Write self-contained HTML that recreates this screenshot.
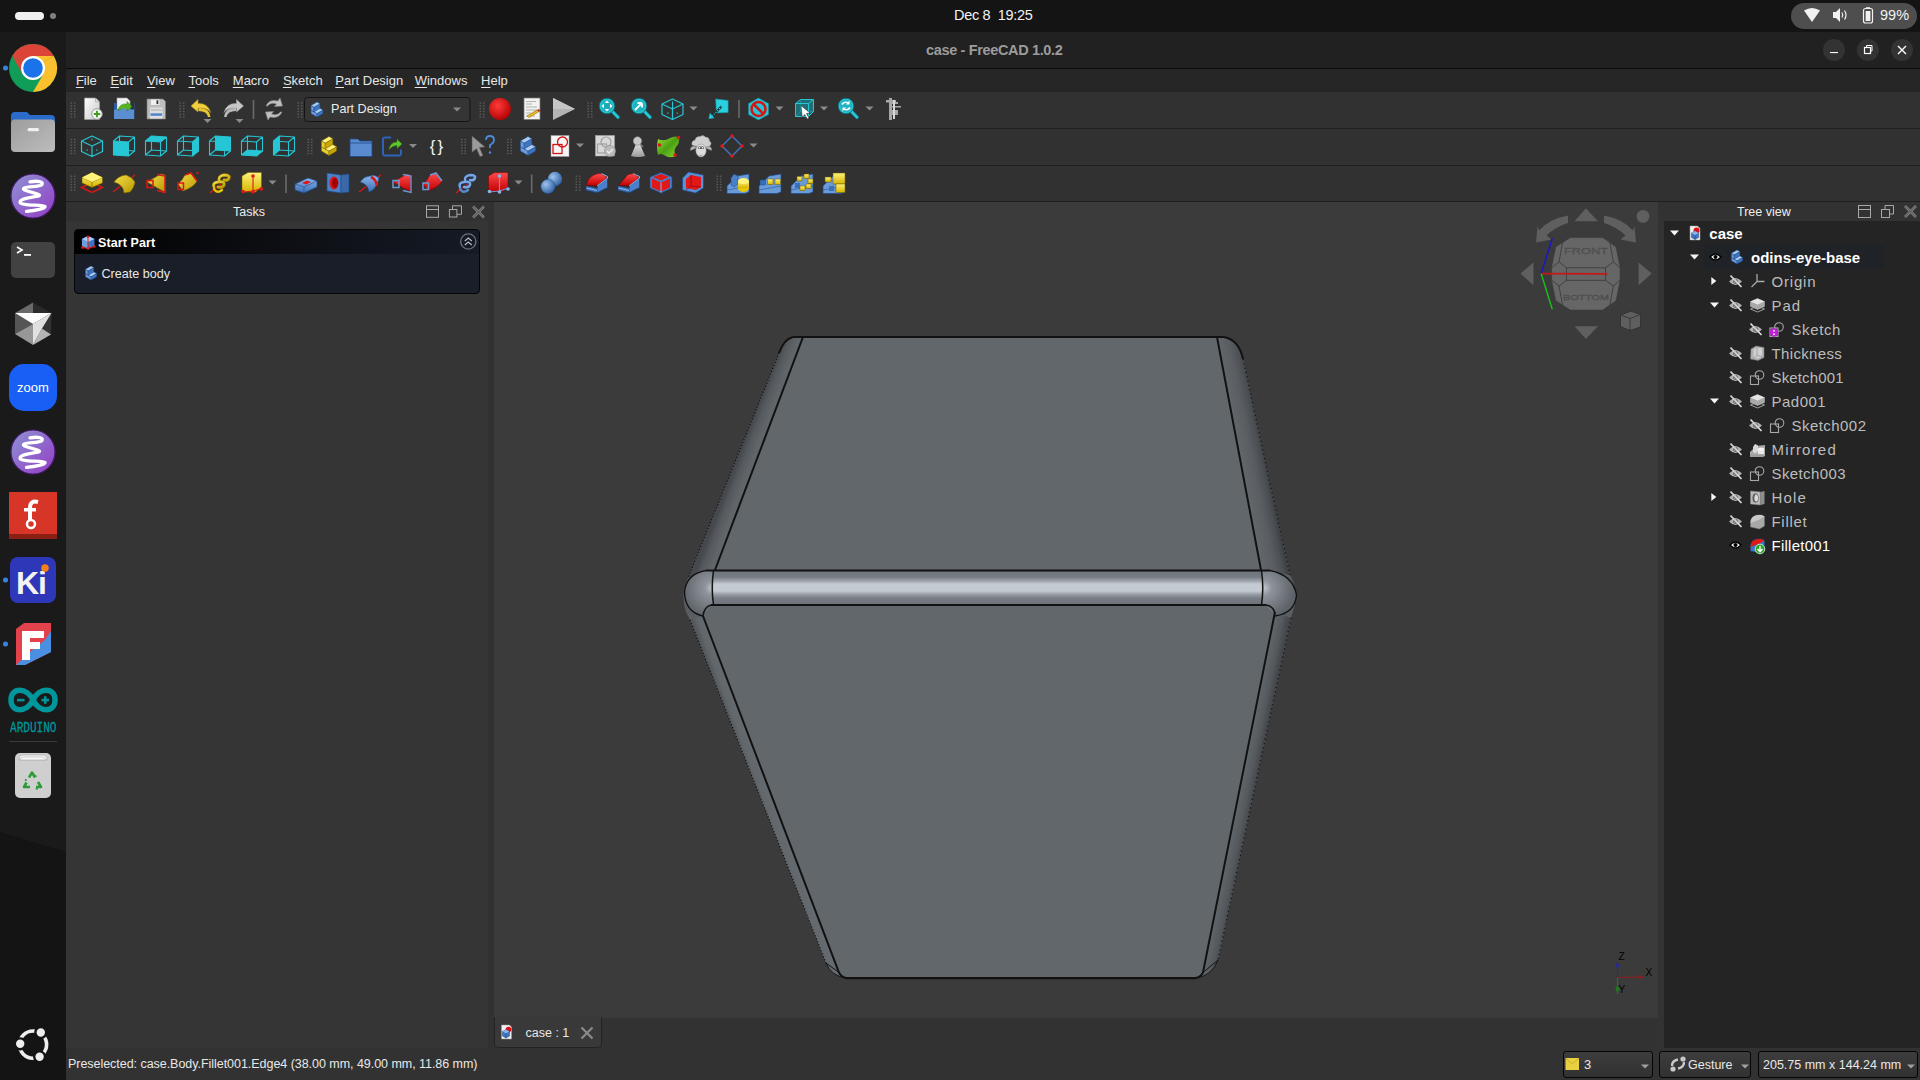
<!DOCTYPE html>
<html><head><meta charset="utf-8">
<style>
*{margin:0;padding:0;box-sizing:border-box}
html,body{width:1920px;height:1080px;overflow:hidden;background:#323232;font-family:"Liberation Sans",sans-serif}
.a{position:absolute}
#topbar{left:0;top:0;width:1920px;height:32px;background:#141414}
#dock{left:0;top:32px;width:66px;height:1048px;background:#1a1a1a}
#titlebar{left:66px;top:32px;width:1854px;height:37px;background:#212121;border-bottom:1px solid #0a0a0a}
#menubar{left:66px;top:69px;width:1854px;height:23px;background:#262626}
.tb{left:66px;width:1854px;background:#313131;border-bottom:1px solid #1f1f1f}
#tasks{left:66px;top:202px;width:422px;height:846px;background:#333333}
#view{left:494px;top:202px;width:1166px;height:815px;background:#3b3b3b}
#tree{left:1663px;top:202px;width:257px;height:846px;background:#333333}
#status{left:66px;top:1048px;width:1854px;height:32px;background:#323232}
.mn{font-size:13px;color:#e8e8e8}
.mn u{text-decoration-thickness:1px;text-underline-offset:2px}
.txt{white-space:nowrap;color:#e6e6e6}
</style></head>
<body>
<div id="topbar" class="a"></div>
<div class="a" style="left:15px;top:12px;width:29px;height:8px;border-radius:4px;background:#f0f0f0"></div>
<div class="a" style="left:50px;top:13px;width:6px;height:6px;border-radius:3px;background:#808080"></div>
<div class="a txt" style="left:954px;top:7px;font-size:14.5px;color:#f2f2f2;letter-spacing:-0.3px">Dec 8&nbsp;&nbsp;19:25</div>
<div class="a" style="left:1791px;top:3px;width:126px;height:26px;border-radius:13px;background:#4e4e4e"></div>
<svg class="a" style="left:1800px;top:6px" width="110" height="20" viewBox="0 0 110 20">
 <path d="M4 4.5 Q12 -0.5 20 4.5 L12 16 Z" fill="#f2f2f2"/>
 <path d="M33 6 h3 l4 -4 v14 l-4 -4 h-3 z" fill="#f2f2f2"/>
 <path d="M42 6.5 q1.6 2.5 0 5" stroke="#f2f2f2" stroke-width="1.2" fill="none"/>
 <path d="M44.5 4.5 q3 4.5 0 9" stroke="#f2f2f2" stroke-width="1.2" fill="none"/>
 <rect x="63.5" y="2.5" width="9" height="14.5" rx="2" stroke="#f2f2f2" stroke-width="1.2" fill="none"/>
 <rect x="65.6" y="5" width="4.8" height="10" fill="#f2f2f2"/>
 <rect x="66" y="1.2" width="4" height="1.5" fill="#f2f2f2"/>
</svg>
<div class="a txt" style="left:1880px;top:7px;font-size:14.5px;color:#f2f2f2">99%</div>

<div id="dock" class="a"></div>
<svg class="a" style="left:0;top:820px" width="66" height="260" viewBox="0 820 66 260"><path d="M0 832 L66 852 V1080 H0Z" fill="#141414"/></svg>
<svg class="a" style="left:0;top:32px" width="66" height="1048" viewBox="0 32 66 1048"><defs><linearGradient id="fold" x1="0" y1="0" x2="1" y2="1"><stop offset="0" stop-color="#9c9c9c"/><stop offset="1" stop-color="#bdbdbd"/></linearGradient><linearGradient id="emg" x1="0" y1="0" x2="1" y2="1"><stop offset="0" stop-color="#8c94d4"/><stop offset="1" stop-color="#943cc4"/></linearGradient><linearGradient id="emg2" x1="0" y1="0" x2="1" y2="1"><stop offset="0" stop-color="#8c94d4"/><stop offset="1" stop-color="#943cc4"/></linearGradient></defs>
 <circle cx="5.5" cy="68" r="2.5" fill="#3584e4"/>
 <g transform="translate(33,68)">
  <circle r="24" fill="#0f9d58"/>
  <path d="M0 0 L-20.8 -12 A24 24 0 0 1 20.8 -12 Z" fill="#db4437"/>
  <path d="M0 0 L20.8 -12 A24 24 0 0 1 0 24 Z" fill="#fbc02d"/>
  <path d="M-20.8 -12 L-10.4 6 L0 0Z" fill="#db4437"/>
  <path d="M20.8 -12 L0 -12 L0 0Z" fill="#fbc02d"/>
  <path d="M0 24 L10.4 6 L0 0Z" fill="#0f9d58"/>
  <circle r="12" fill="#fff"/><circle r="9.8" fill="#1a73e8"/>
 </g>
 <path d="M11 116 q0 -4 4 -4 h12 l3 3 h21 q4 0 4 4 v8 h-44z" fill="#2b6bc9"/>
 <rect x="11" y="119.5" width="44" height="32.5" rx="4" fill="url(#fold)"/>
 <rect x="27.5" y="128" width="11.5" height="3.2" rx="1.5" fill="#f0f0f0"/>
 <circle cx="33" cy="196" r="22" fill="url(#emg)" stroke="#4a1a70" stroke-width="1.2"/>
 <path transform="translate(0,0)" d="M30 181.8 C 38 180.5, 43.5 181.5, 42 184.5 C 40 187.5, 25 186, 23.5 188.5 C 22.5 191, 37 193, 39.5 195.2 C 40 197, 21 197, 20 202 C 19.5 206, 43 204.5, 45 206.5 C 46 208.5, 35 210.5, 26.5 211.3" stroke="#fff" stroke-width="3.3" fill="none" stroke-linecap="round" stroke-linejoin="round"/>
 <rect x="11" y="242" width="44" height="36" rx="5" fill="#424242"/>
 <path d="M17 247 l5 3 l-5 3" stroke="#fff" stroke-width="1.6" fill="none"/>
 <rect x="24" y="254" width="7" height="1.8" fill="#fff"/>
 <g>
  <path d="M33 302.5 L15 313 L33 313Z" fill="#6a6a6a"/>
  <path d="M33 302.5 L33 313 L51.5 313Z" fill="#2a2a2a"/>
  <path d="M15 313 L15 334 L33 324Z" fill="#555"/>
  <path d="M15 334 L33 324 L33 345Z" fill="#979797"/>
  <path d="M51.5 313 L42 328.5 L51 334.5Z" fill="#333"/>
  <path d="M42 328.5 L51 334.5 L33 345Z" fill="#b4b4b4"/>
  <path d="M51.5 313 L33 324 L33 345 L42 328.5Z" fill="#e0e0e0"/>
  <path d="M15 313 L51.5 313 L33 324Z" fill="#fcfcfc"/>
 </g>
 <rect x="9" y="364" width="48" height="47" rx="15" fill="#1a5ff5"/>
 <text x="33" y="392" font-family="Liberation Sans" font-size="13" fill="#fff" text-anchor="middle">zoom</text>
 <circle cx="33" cy="452" r="22" fill="url(#emg2)" stroke="#4a1a70" stroke-width="1.2"/>
 <path transform="translate(0,256)" d="M30 181.8 C 38 180.5, 43.5 181.5, 42 184.5 C 40 187.5, 25 186, 23.5 188.5 C 22.5 191, 37 193, 39.5 195.2 C 40 197, 21 197, 20 202 C 19.5 206, 43 204.5, 45 206.5 C 46 208.5, 35 210.5, 26.5 211.3" stroke="#fff" stroke-width="3.3" fill="none" stroke-linecap="round" stroke-linejoin="round"/>
 <rect x="9" y="492" width="48" height="47" fill="#d63527"/>
 <rect x="9" y="534" width="48" height="5" fill="#8a1f15"/>
 <path d="M38 502 q-8 -2 -8 6 v13" stroke="#fff" stroke-width="4" fill="none"/>
 <rect x="24" y="508" width="12" height="3.5" fill="#fff"/>
 <circle cx="31" cy="524" r="4" fill="none" stroke="#fff" stroke-width="2.5"/>
 <circle cx="5.5" cy="580" r="2.5" fill="#3584e4"/>
 <rect x="10" y="557" width="46" height="46" rx="8" fill="#2e37b8"/>
 <text x="31" y="594" font-family="Liberation Sans" font-size="32" font-weight="bold" fill="#f4f4f4" text-anchor="middle" letter-spacing="-1">Ki</text>
 <circle cx="45" cy="568" r="3.8" fill="#f77f16"/>
 <circle cx="5.5" cy="644" r="2.5" fill="#3584e4"/>
 <path d="M16 629 L24 623 L51 623 L51 652 L25 665 L16 665 Z" fill="#e2424b"/>
 <path d="M51 631 L51 652 L25 665 L16 665 L30 652 L45 640Z" fill="#4a90e2"/>
 <path d="M22 631 H44 V638 H30 V642 H40 V649 H30 V660 H22Z" fill="#fff"/>
 <path d="M33 700 C 27 687, 11 687, 11 700 C 11 713, 27 713, 33 700 C 39 687, 55 687, 55 700 C 55 713, 39 713, 33 700 Z" fill="none" stroke="#00979c" stroke-width="5.5"/>
 <rect x="17" y="698.8" width="7.5" height="2.6" fill="#00979c"/>
 <rect x="41.5" y="698.8" width="7.5" height="2.6" fill="#00979c"/>
 <rect x="43.95" y="696.3" width="2.6" height="7.5" fill="#00979c"/>
 <text x="10" y="732" font-family="Liberation Mono" font-size="15.5" fill="#00979c" stroke="#00979c" stroke-width="0.3" textLength="46.5" lengthAdjust="spacingAndGlyphs">ARDUINO</text>
 <rect x="9" y="741" width="48" height="1" fill="#3a3a3a"/>
 <rect x="15" y="753" width="36" height="45" rx="5" fill="#cfcfcf"/>
 <path d="M19 760 q0 -5 4 -5 h20 q4 0 4 5z" fill="#f8f8f8" stroke="#999" stroke-width="0.6"/><path d="M20 760 q1 -3 4 -3 h18 q3 0 4 3" fill="none" stroke="#aaa" stroke-width="0.6"/>
 <g fill="none" stroke="#2e9b3a" stroke-width="2.6" stroke-linejoin="round">
  <path d="M29 777.5 l3 -5 l3 5"/><path d="M38 782 l3 5 h-5"/><path d="M30 787 h-6 l2.5 -4.5"/>
 </g>
 <path d="M34.5 776 l2.5 1.5 l-1 -3z M37.5 787 l-2.5 2 l3 1z M24.5 781 l3 -0.5 l-2 -2z" fill="#2e9b3a"/>
 <g>
  <circle cx="33" cy="1044.6" r="13.6" fill="none" stroke="#eeeeee" stroke-width="3.6"/>
  <circle cx="20.2" cy="1043.8" r="5.4" fill="#eeeeee" stroke="#141414" stroke-width="2.4"/>
  <circle cx="40.8" cy="1032.5" r="5.4" fill="#eeeeee" stroke="#141414" stroke-width="2.4"/>
  <circle cx="39.6" cy="1056.8" r="5.4" fill="#eeeeee" stroke="#141414" stroke-width="2.4"/>
 </g>
</svg>

<div id="titlebar" class="a"></div>
<div class="a txt" style="left:926px;top:42px;font-size:14.5px;font-weight:bold;color:#9c9c9c;letter-spacing:-0.35px">case - FreeCAD 1.0.2</div>
<div class="a" style="left:1823px;top:39px;width:22px;height:22px;border-radius:11px;background:#333"></div>
<div class="a" style="left:1857px;top:39px;width:22px;height:22px;border-radius:11px;background:#333"></div>
<div class="a" style="left:1891px;top:39px;width:22px;height:22px;border-radius:11px;background:#333"></div>
<svg class="a" style="left:1820px;top:36px" width="100" height="28" viewBox="1820 36 100 28">
 <rect x="1830" y="52" width="8" height="1.1" fill="#fff"/>
 <rect x="1864.5" y="47.5" width="6" height="6" stroke="#fff" stroke-width="1.2" fill="none"/>
 <path d="M1866.5 47 v-1.5 h5.5 v5.5 h-1.3" stroke="#fff" stroke-width="1" fill="none"/>
 <path d="M1898 46 l8 8 M1906 46 l-8 8" stroke="#fff" stroke-width="1.4"/>
</svg>

<div id="menubar" class="a"></div>
<div class="a txt mn" style="left:75.9px;top:73px"><u>F</u>ile</div>
<div class="a txt mn" style="left:110.4px;top:73px"><u>E</u>dit</div>
<div class="a txt mn" style="left:146.9px;top:73px"><u>V</u>iew</div>
<div class="a txt mn" style="left:188.5px;top:73px"><u>T</u>ools</div>
<div class="a txt mn" style="left:232.8px;top:73px"><u>M</u>acro</div>
<div class="a txt mn" style="left:282.9px;top:73px"><u>S</u>ketch</div>
<div class="a txt mn" style="left:335.3px;top:73px"><u>P</u>art Design</div>
<div class="a txt mn" style="left:414.7px;top:73px"><u>W</u>indows</div>
<div class="a txt mn" style="left:481.1px;top:73px"><u>H</u>elp</div>

<div class="a tb" style="top:92px;height:37px"></div>
<div class="a tb" style="top:129px;height:37px"></div>
<div class="a tb" style="top:166px;height:36px"></div>
<svg class="a" style="left:0;top:0" width="920" height="202" viewBox="0 0 920 202"><defs>
<linearGradient id="gPage" x1="0" y1="0" x2="1" y2="1"><stop offset="0" stop-color="#ffffff"/><stop offset="1" stop-color="#c8c8c8"/></linearGradient>
<linearGradient id="gYel" x1="0" y1="0" x2="0" y2="1"><stop offset="0" stop-color="#fff27a"/><stop offset="1" stop-color="#d6b400"/></linearGradient>
<linearGradient id="gYel2" x1="0" y1="0" x2="1" y2="1"><stop offset="0" stop-color="#f5e04a"/><stop offset="1" stop-color="#b89800"/></linearGradient>
<linearGradient id="gBlue" x1="0" y1="0" x2="0" y2="1"><stop offset="0" stop-color="#8cb8ec"/><stop offset="1" stop-color="#3a6db5"/></linearGradient>
<linearGradient id="gRed" x1="0" y1="0" x2="0" y2="1"><stop offset="0" stop-color="#ff4a4a"/><stop offset="1" stop-color="#c00000"/></linearGradient>
<radialGradient id="gRec" cx="0.4" cy="0.35" r="0.7"><stop offset="0" stop-color="#ff3a3a"/><stop offset="1" stop-color="#b00000"/></radialGradient>
<linearGradient id="gGrey" x1="0" y1="0" x2="0" y2="1"><stop offset="0" stop-color="#e0e0e0"/><stop offset="1" stop-color="#9a9a9a"/></linearGradient>
<radialGradient id="gSph" cx="0.35" cy="0.35" r="0.7"><stop offset="0" stop-color="#9cc4f0"/><stop offset="1" stop-color="#2f5f9e"/></radialGradient>
<linearGradient id="gGreen" x1="0" y1="0" x2="1" y2="1"><stop offset="0" stop-color="#9be23a"/><stop offset="0.5" stop-color="#4aa012"/><stop offset="1" stop-color="#8fdc2a"/></linearGradient>
</defs><rect x="70.5" y="102.3" width="1.6" height="1.4" fill="#5a5a5a"/><rect x="73.9" y="102.3" width="1.6" height="1.4" fill="#5a5a5a"/><rect x="70.5" y="105.1" width="1.6" height="1.4" fill="#5a5a5a"/><rect x="73.9" y="105.1" width="1.6" height="1.4" fill="#5a5a5a"/><rect x="70.5" y="107.9" width="1.6" height="1.4" fill="#5a5a5a"/><rect x="73.9" y="107.9" width="1.6" height="1.4" fill="#5a5a5a"/><rect x="70.5" y="110.7" width="1.6" height="1.4" fill="#5a5a5a"/><rect x="73.9" y="110.7" width="1.6" height="1.4" fill="#5a5a5a"/><rect x="70.5" y="113.5" width="1.6" height="1.4" fill="#5a5a5a"/><rect x="73.9" y="113.5" width="1.6" height="1.4" fill="#5a5a5a"/><rect x="70.5" y="116.3" width="1.6" height="1.4" fill="#5a5a5a"/><rect x="73.9" y="116.3" width="1.6" height="1.4" fill="#5a5a5a"/><path d="M84.5 98 h11 l4 4 v17.5 h-15z" fill="url(#gPage)" stroke="#9a9a9a" stroke-width="0.7"/><path d="M95.5 98 v4 h4" fill="#ddd" stroke="#999" stroke-width="0.6"/><circle cx="97" cy="114" r="5.3" fill="#f4f4f4" stroke="#8a8a8a" stroke-width="0.8"/><path d="M97 110.8 v6.4 M93.8 114 h6.4" stroke="#3aa018" stroke-width="1.9"/><path d="M117 98 h10 l3 3 v10 h-13z" fill="#f2f2f2" stroke="#aaa" stroke-width="0.6"/><path d="M114 103 h3 v6 h17 v-6 h0.5 v16 h-20.5z" fill="#2d5fa0"/><path d="M114 110 q8 -3 20 0 v9 h-20z" fill="#5b8fd0"/><path d="M118 110 q2 -7 9 -6 l0 -2.5 l5 5 l-5 4.5 v-2.5 q-5 -1 -9 2z" fill="#52b520" stroke="#2f7a10" stroke-width="0.5"/><path d="M147 99 h16 l2.5 2.5 v17.5 h-18.5z" fill="#bdbdbd" stroke="#7a7a7a" stroke-width="0.7"/><rect x="151" y="99.5" width="8.5" height="5.5" fill="#f0f0f0"/><rect x="156.5" y="100.3" width="1.8" height="3.8" fill="#333"/><rect x="150" y="107.5" width="12.5" height="11" fill="#dedede"/><rect x="150.5" y="113.3" width="11.5" height="2.5" fill="#4d84cf"/><rect x="150.5" y="109.5" width="11.5" height="1" fill="#aaa"/><rect x="179.5" y="102.3" width="1.6" height="1.4" fill="#5a5a5a"/><rect x="182.9" y="102.3" width="1.6" height="1.4" fill="#5a5a5a"/><rect x="179.5" y="105.1" width="1.6" height="1.4" fill="#5a5a5a"/><rect x="182.9" y="105.1" width="1.6" height="1.4" fill="#5a5a5a"/><rect x="179.5" y="107.9" width="1.6" height="1.4" fill="#5a5a5a"/><rect x="182.9" y="107.9" width="1.6" height="1.4" fill="#5a5a5a"/><rect x="179.5" y="110.7" width="1.6" height="1.4" fill="#5a5a5a"/><rect x="182.9" y="110.7" width="1.6" height="1.4" fill="#5a5a5a"/><rect x="179.5" y="113.5" width="1.6" height="1.4" fill="#5a5a5a"/><rect x="182.9" y="113.5" width="1.6" height="1.4" fill="#5a5a5a"/><rect x="179.5" y="116.3" width="1.6" height="1.4" fill="#5a5a5a"/><rect x="182.9" y="116.3" width="1.6" height="1.4" fill="#5a5a5a"/><path d="M191 106 l7 -6.5 v4 q10 -0.5 12.5 9 q-3 -5 -12.5 -4.5 v4z" fill="#f0d040" stroke="#b89a10" stroke-width="0.6"/><path d="M198.5 108 q11 -0.5 12 9 l-2.5 0 q-1 -6 -9.5 -6z" fill="#e8c430"/><path d="M203.5 119 h8 l-4 4z" fill="#8a8a8a"/><path d="M243.5 106 l-7 -6.5 v4 q-10 -0.5 -12.5 9 q3 -5 12.5 -4.5 v4z" fill="#c8c8c8" stroke="#9a9a9a" stroke-width="0.6"/><path d="M236 108 q-11 -0.5 -12 9 l2.5 0 q1 -6 9.5 -6z" fill="#b8b8b8"/><path d="M235.5 119 h8 l-4 4z" fill="#8a8a8a"/><rect x="252.7" y="100" width="1.6" height="19" fill="#6a6a6a"/><path d="M266 106 q3 -7 12 -5 l2 -3 l2.5 8 l-8 0.5 l2 -2.5 q-6 -2 -9 2z" fill="#c0c0c0" stroke="#8a8a8a" stroke-width="0.6"/><path d="M282 112 q-3 7 -12 5 l-2 3 l-2.5 -8 l8 -0.5 l-2 2.5 q6 2 9 -2z" fill="#c0c0c0" stroke="#8a8a8a" stroke-width="0.6"/><rect x="297.5" y="102.3" width="1.6" height="1.4" fill="#5a5a5a"/><rect x="300.9" y="102.3" width="1.6" height="1.4" fill="#5a5a5a"/><rect x="297.5" y="105.1" width="1.6" height="1.4" fill="#5a5a5a"/><rect x="300.9" y="105.1" width="1.6" height="1.4" fill="#5a5a5a"/><rect x="297.5" y="107.9" width="1.6" height="1.4" fill="#5a5a5a"/><rect x="300.9" y="107.9" width="1.6" height="1.4" fill="#5a5a5a"/><rect x="297.5" y="110.7" width="1.6" height="1.4" fill="#5a5a5a"/><rect x="300.9" y="110.7" width="1.6" height="1.4" fill="#5a5a5a"/><rect x="297.5" y="113.5" width="1.6" height="1.4" fill="#5a5a5a"/><rect x="300.9" y="113.5" width="1.6" height="1.4" fill="#5a5a5a"/><rect x="297.5" y="116.3" width="1.6" height="1.4" fill="#5a5a5a"/><rect x="300.9" y="116.3" width="1.6" height="1.4" fill="#5a5a5a"/><rect x="304.5" y="97.5" width="165.5" height="24" rx="3" fill="#353535" stroke="#141414" stroke-width="1"/><path d="M311.00 113.54 L317.00 117.00 L317.00 113.54 L311.00 110.08Z" fill="#6c9cdc" stroke="#1d4a8a" stroke-width="0.5" stroke-linejoin="round"/><path d="M323.00 113.54 L317.00 117.00 L317.00 113.54 L323.00 110.08Z" fill="#3f74c0" stroke="#1d4a8a" stroke-width="0.5" stroke-linejoin="round"/><path d="M317.00 106.62 L323.00 110.08 L317.00 113.54 L311.00 110.08Z" fill="#a9ccf2" stroke="#1d4a8a" stroke-width="0.5" stroke-linejoin="round"/><path d="M311.00 110.08 L314.00 111.81 L314.00 107.19 L311.00 105.46Z" fill="#6c9cdc" stroke="#1d4a8a" stroke-width="0.5" stroke-linejoin="round"/><path d="M320.00 108.35 L314.00 111.81 L314.00 107.19 L320.00 103.73Z" fill="#3f74c0" stroke="#1d4a8a" stroke-width="0.5" stroke-linejoin="round"/><path d="M317.00 102.00 L320.00 103.73 L314.00 107.19 L311.00 105.46Z" fill="#a9ccf2" stroke="#1d4a8a" stroke-width="0.5" stroke-linejoin="round"/><path d="M453 107.5 h8 l-4 4z" fill="#8a8a8a"/><rect x="479.5" y="102.3" width="1.6" height="1.4" fill="#5a5a5a"/><rect x="482.9" y="102.3" width="1.6" height="1.4" fill="#5a5a5a"/><rect x="479.5" y="105.1" width="1.6" height="1.4" fill="#5a5a5a"/><rect x="482.9" y="105.1" width="1.6" height="1.4" fill="#5a5a5a"/><rect x="479.5" y="107.9" width="1.6" height="1.4" fill="#5a5a5a"/><rect x="482.9" y="107.9" width="1.6" height="1.4" fill="#5a5a5a"/><rect x="479.5" y="110.7" width="1.6" height="1.4" fill="#5a5a5a"/><rect x="482.9" y="110.7" width="1.6" height="1.4" fill="#5a5a5a"/><rect x="479.5" y="113.5" width="1.6" height="1.4" fill="#5a5a5a"/><rect x="482.9" y="113.5" width="1.6" height="1.4" fill="#5a5a5a"/><rect x="479.5" y="116.3" width="1.6" height="1.4" fill="#5a5a5a"/><rect x="482.9" y="116.3" width="1.6" height="1.4" fill="#5a5a5a"/><circle cx="500" cy="109" r="11" fill="url(#gRec)"/><rect x="524" y="98" width="16" height="21.5" fill="#f2f2ee" stroke="#777" stroke-width="0.7"/><path d="M526 101.5 h10 M526 104 h6 M526 107 h11 M526 110 h11 M526 113 h5 M526 116 h9" stroke="#999" stroke-width="0.7"/><path d="M527 116 l10 -6 l2 1.5 l-10 6z" fill="#e8c020" stroke="#805000" stroke-width="0.5"/><path d="M537 110 l2 -1 l1.5 2 l-1.5 0.8z" fill="#d02020"/><path d="M553 98 l22 11 l-22 11z" fill="#b4b4b4"/><path d="M553 98 l22 11 h-22z" fill="#c6c6c6"/><rect x="587.5" y="102.3" width="1.6" height="1.4" fill="#5a5a5a"/><rect x="590.9" y="102.3" width="1.6" height="1.4" fill="#5a5a5a"/><rect x="587.5" y="105.1" width="1.6" height="1.4" fill="#5a5a5a"/><rect x="590.9" y="105.1" width="1.6" height="1.4" fill="#5a5a5a"/><rect x="587.5" y="107.9" width="1.6" height="1.4" fill="#5a5a5a"/><rect x="590.9" y="107.9" width="1.6" height="1.4" fill="#5a5a5a"/><rect x="587.5" y="110.7" width="1.6" height="1.4" fill="#5a5a5a"/><rect x="590.9" y="110.7" width="1.6" height="1.4" fill="#5a5a5a"/><rect x="587.5" y="113.5" width="1.6" height="1.4" fill="#5a5a5a"/><rect x="590.9" y="113.5" width="1.6" height="1.4" fill="#5a5a5a"/><rect x="587.5" y="116.3" width="1.6" height="1.4" fill="#5a5a5a"/><rect x="590.9" y="116.3" width="1.6" height="1.4" fill="#5a5a5a"/><path d="M612 111 l6 6.2" stroke="#0e5a62" stroke-width="4" stroke-linecap="round"/><path d="M612 111 l6 6.2" stroke="#26c6d6" stroke-width="2.8" stroke-linecap="round"/><circle cx="607" cy="106" r="7.8" fill="#26c6d6" stroke="#0e6a74" stroke-width="0.9"/><circle cx="607" cy="106" r="6" fill="#1fb2c0"/><path d="M607 100.5 l2.2 2.5 h-4.4z M607 111.5 l2.2 -2.5 h-4.4z M601.5 106 l2.5 2.2 v-4.4z M612.5 106 l-2.5 2.2 v-4.4z" fill="#fff"/><rect x="604.5" y="103.5" width="5" height="5" fill="#1fa8b5"/><path d="M644 111 l6 6.2" stroke="#0e5a62" stroke-width="4" stroke-linecap="round"/><path d="M644 111 l6 6.2" stroke="#26c6d6" stroke-width="2.8" stroke-linecap="round"/><circle cx="639" cy="106" r="7.8" fill="#26c6d6" stroke="#0e6a74" stroke-width="0.9"/><circle cx="639" cy="106" r="6" fill="#1fb2c0"/><path d="M635 110 l7 -7 M642 103 h-4.5 M642 103 v4.5" stroke="#fff" stroke-width="1.8" fill="none"/><path d="M672.5 99.0 L683.0 104.0 L672.5 109.0 L662.0 104.0Z M662.0 104.0 L672.5 109.0 L672.5 119.5 L662.0 114.5Z M672.5 109.0 L683.0 104.0 L683.0 114.5 L672.5 119.5Z" fill="none" stroke="#26c6d6" stroke-width="1.2" stroke-linejoin="round"/><path d="M672.5 101.5 v17.5" stroke="#26c6d6" stroke-width="1.1"/><path d="M667 113.5 l1.5 -0.8 M678 113.5 l-1.5 -0.8" stroke="#26c6d6" stroke-width="1"/><path d="M689.5 106.5 h8 l-4 4z" fill="#8a8a8a"/><path d="M715.7 99 L728.1 100.5 L728.1 112.5 L716.4 112.9Z" fill="#2ad0e0" stroke="#149aa8" stroke-width="0.6"/><path d="M721.6 106.3 L711.7 116.9" stroke="#1a1a1a" stroke-width="2.2"/><path d="M721.6 106.3 L711.7 116.9" stroke="#2ad0e0" stroke-width="1.2" stroke-dasharray="1.5 1"/><path d="M708.8 118.7 L709.9 113.2 L714.2 117.9Z" fill="#2ad0e0" stroke="#149aa8" stroke-width="0.5"/><rect x="738.2" y="100" width="1.6" height="18" fill="#6a6a6a"/><path d="M758.5 98 l10 5.5 v11 l-10 5.5 l-10 -5.5 v-11z" fill="#26c6d6" stroke="#148a96" stroke-width="0.6"/><circle cx="758.5" cy="109" r="7" fill="none" stroke="#d01818" stroke-width="2.6"/><path d="M753.5 104 l10 10" stroke="#d01818" stroke-width="2.6"/><path d="M775.5 106.5 h8 l-4 4z" fill="#8a8a8a"/><path d="M795.5 103.5 l5 -4 h13 v12 l-5 5 h-13z" fill="#1d6f78" stroke="#26c6d6" stroke-width="1"/><path d="M795.5 103.5 h13 v13 M808.5 103.5 l5 -4" stroke="#26c6d6" stroke-width="1" fill="none"/><path d="M800.5 99.5 v12 l-5 5 M800.5 111.5 h13" stroke="#26c6d6" stroke-width="0.6" fill="none" opacity="0.6"/><path d="M801 105.5 l9 7.5 l-3.5 0.5 l2.5 4.5 l-1.8 1 l-2.5 -4.5 l-2.5 2.5z" fill="#fff" stroke="#222" stroke-width="0.5"/><path d="M820 106.5 h8 l-4 4z" fill="#8a8a8a"/><path d="M851 111 l6 6.2" stroke="#0e5a62" stroke-width="4" stroke-linecap="round"/><path d="M851 111 l6 6.2" stroke="#26c6d6" stroke-width="2.8" stroke-linecap="round"/><circle cx="846" cy="106" r="7.8" fill="#26c6d6" stroke="#0e6a74" stroke-width="0.9"/><circle cx="846" cy="106" r="6" fill="#1fb2c0"/><path d="M842 104.5 q2 -3.5 6.5 -1.5 M850 107.5 q-2 3.5 -6.5 1.5" stroke="#fff" stroke-width="1.6" fill="none"/><path d="M849.5 100.5 v4 h-3.5z M842.5 111.5 v-4 h3.5z" fill="#fff"/><path d="M865.5 106.5 h8 l-4 4z" fill="#8a8a8a"/><path d="M889 98 h3 v22 h-3z M886 100 h10 v2.5 h-10z M892 102 h6 v2 h-6z M892 106 h9 v1.5 h-9z M892 110 h6 v5 h-6z" fill="#a8a8a8"/><path d="M893 100 h2 v19 h-2z" fill="#d8d8d8"/><rect x="70.5" y="138.8" width="1.6" height="1.4" fill="#5a5a5a"/><rect x="73.9" y="138.8" width="1.6" height="1.4" fill="#5a5a5a"/><rect x="70.5" y="141.6" width="1.6" height="1.4" fill="#5a5a5a"/><rect x="73.9" y="141.6" width="1.6" height="1.4" fill="#5a5a5a"/><rect x="70.5" y="144.4" width="1.6" height="1.4" fill="#5a5a5a"/><rect x="73.9" y="144.4" width="1.6" height="1.4" fill="#5a5a5a"/><rect x="70.5" y="147.2" width="1.6" height="1.4" fill="#5a5a5a"/><rect x="73.9" y="147.2" width="1.6" height="1.4" fill="#5a5a5a"/><rect x="70.5" y="150.0" width="1.6" height="1.4" fill="#5a5a5a"/><rect x="73.9" y="150.0" width="1.6" height="1.4" fill="#5a5a5a"/><rect x="70.5" y="152.8" width="1.6" height="1.4" fill="#5a5a5a"/><rect x="73.9" y="152.8" width="1.6" height="1.4" fill="#5a5a5a"/><path d="M92 136.0 L102.5 141.0 L92 146.0 L81.5 141.0Z M81.5 141.0 L92 146.0 L92 156.5 L81.5 151.5Z M92 146.0 L102.5 141.0 L102.5 151.5 L92 156.5Z" fill="none" stroke="#26c6d6" stroke-width="1.2" stroke-linejoin="round"/><path d="M113.5 141.0 L128.5 142.0 L128.5 156.0 L113.5 155.0Z" fill="#26c6d6"/><path d="M113.5 141.0 L128.5 142.0 L128.5 156.0 L113.5 155.0Z M119.5 136.0 L134.5 137.0 L134.5 151.0 L119.5 150.0Z M113.5 141.0 L119.5 136.0 M128.5 142.0 L134.5 137.0 M128.5 156.0 L134.5 151.0 M113.5 155.0 L119.5 150.0" fill="none" stroke="#26c6d6" stroke-width="1.1" stroke-linejoin="round"/><path d="M145.5 141.0 L160.5 142.0 L166.5 137.0 L151.5 136.0Z" fill="#26c6d6"/><path d="M145.5 141.0 L160.5 142.0 L160.5 156.0 L145.5 155.0Z M151.5 136.0 L166.5 137.0 L166.5 151.0 L151.5 150.0Z M145.5 141.0 L151.5 136.0 M160.5 142.0 L166.5 137.0 M160.5 156.0 L166.5 151.0 M145.5 155.0 L151.5 150.0" fill="none" stroke="#26c6d6" stroke-width="1.1" stroke-linejoin="round"/><path d="M192.5 142.0 L198.5 137.0 L198.5 151.0 L192.5 156.0Z" fill="#26c6d6"/><path d="M177.5 141.0 L192.5 142.0 L192.5 156.0 L177.5 155.0Z M183.5 136.0 L198.5 137.0 L198.5 151.0 L183.5 150.0Z M177.5 141.0 L183.5 136.0 M192.5 142.0 L198.5 137.0 M192.5 156.0 L198.5 151.0 M177.5 155.0 L183.5 150.0" fill="none" stroke="#26c6d6" stroke-width="1.1" stroke-linejoin="round"/><path d="M215.5 136.0 L230.5 137.0 L230.5 151.0 L215.5 150.0Z" fill="#26c6d6"/><path d="M209.5 141.0 L224.5 142.0 L224.5 156.0 L209.5 155.0Z M215.5 136.0 L230.5 137.0 L230.5 151.0 L215.5 150.0Z M209.5 141.0 L215.5 136.0 M224.5 142.0 L230.5 137.0 M224.5 156.0 L230.5 151.0 M209.5 155.0 L215.5 150.0" fill="none" stroke="#26c6d6" stroke-width="1.1" stroke-linejoin="round"/><path d="M241.5 155.0 L256.5 156.0 L262.5 151.0 L247.5 150.0Z" fill="#26c6d6"/><path d="M241.5 141.0 L256.5 142.0 L256.5 156.0 L241.5 155.0Z M247.5 136.0 L262.5 137.0 L262.5 151.0 L247.5 150.0Z M241.5 141.0 L247.5 136.0 M256.5 142.0 L262.5 137.0 M256.5 156.0 L262.5 151.0 M241.5 155.0 L247.5 150.0" fill="none" stroke="#26c6d6" stroke-width="1.1" stroke-linejoin="round"/><path d="M273.5 141.0 L279.5 136.0 L279.5 150.0 L273.5 155.0Z" fill="#26c6d6"/><path d="M273.5 141.0 L288.5 142.0 L288.5 156.0 L273.5 155.0Z M279.5 136.0 L294.5 137.0 L294.5 151.0 L279.5 150.0Z M273.5 141.0 L279.5 136.0 M288.5 142.0 L294.5 137.0 M288.5 156.0 L294.5 151.0 M273.5 155.0 L279.5 150.0" fill="none" stroke="#26c6d6" stroke-width="1.1" stroke-linejoin="round"/><path d="M92 138.5 v2 M86.5 150.5 l1.5 -0.8 M97.5 150.5 l-1.5 -0.8" stroke="#26c6d6" stroke-width="1"/><rect x="307.5" y="138.8" width="1.6" height="1.4" fill="#5a5a5a"/><rect x="310.9" y="138.8" width="1.6" height="1.4" fill="#5a5a5a"/><rect x="307.5" y="141.6" width="1.6" height="1.4" fill="#5a5a5a"/><rect x="310.9" y="141.6" width="1.6" height="1.4" fill="#5a5a5a"/><rect x="307.5" y="144.4" width="1.6" height="1.4" fill="#5a5a5a"/><rect x="310.9" y="144.4" width="1.6" height="1.4" fill="#5a5a5a"/><rect x="307.5" y="147.2" width="1.6" height="1.4" fill="#5a5a5a"/><rect x="310.9" y="147.2" width="1.6" height="1.4" fill="#5a5a5a"/><rect x="307.5" y="150.0" width="1.6" height="1.4" fill="#5a5a5a"/><rect x="310.9" y="150.0" width="1.6" height="1.4" fill="#5a5a5a"/><rect x="307.5" y="152.8" width="1.6" height="1.4" fill="#5a5a5a"/><rect x="310.9" y="152.8" width="1.6" height="1.4" fill="#5a5a5a"/><path d="M321.41 151.12 L329.00 155.50 L329.00 151.12 L321.41 146.73Z" fill="#e8d030" stroke="#7a6400" stroke-width="0.5" stroke-linejoin="round"/><path d="M336.59 151.12 L329.00 155.50 L329.00 151.12 L336.59 146.73Z" fill="#c8a800" stroke="#7a6400" stroke-width="0.5" stroke-linejoin="round"/><path d="M329.00 142.35 L336.59 146.73 L329.00 151.12 L321.41 146.73Z" fill="#fff27a" stroke="#7a6400" stroke-width="0.5" stroke-linejoin="round"/><path d="M321.41 146.73 L325.20 148.92 L325.20 143.08 L321.41 140.88Z" fill="#e8d030" stroke="#7a6400" stroke-width="0.5" stroke-linejoin="round"/><path d="M332.80 144.54 L325.20 148.92 L325.20 143.08 L332.80 138.69Z" fill="#c8a800" stroke="#7a6400" stroke-width="0.5" stroke-linejoin="round"/><path d="M329.00 136.50 L332.80 138.69 L325.20 143.08 L321.41 140.88Z" fill="#fff27a" stroke="#7a6400" stroke-width="0.5" stroke-linejoin="round"/><path d="M350 139 h8 l2 2 h12 v15.5 h-22z" fill="#5a8bd0" stroke="#1d4a8a" stroke-width="0.8"/><path d="M350 143 h22" stroke="#1d4a8a" stroke-width="0.8"/><path d="M391 137.5 h-6 q-2 0 -2 2 v14 q0 2 2 2 h14 q2 0 2 -2 v-4" stroke="#2d62b8" stroke-width="2" fill="none"/><path d="M389 150 q1 -8 8 -8 v-3 l5 5 l-5 4.5 v-3 q-5 0 -8 4.5z" fill="#5ec82a" stroke="#2f7a10" stroke-width="0.5"/><path d="M409 144 h8 l-4 4z" fill="#8a8a8a"/><text x="437.5" y="152" font-family="Liberation Sans" font-size="17" fill="#f0f0f0" text-anchor="middle" letter-spacing="2">{}</text><rect x="461" y="138.8" width="1.6" height="1.4" fill="#5a5a5a"/><rect x="464.4" y="138.8" width="1.6" height="1.4" fill="#5a5a5a"/><rect x="461" y="141.6" width="1.6" height="1.4" fill="#5a5a5a"/><rect x="464.4" y="141.6" width="1.6" height="1.4" fill="#5a5a5a"/><rect x="461" y="144.4" width="1.6" height="1.4" fill="#5a5a5a"/><rect x="464.4" y="144.4" width="1.6" height="1.4" fill="#5a5a5a"/><rect x="461" y="147.2" width="1.6" height="1.4" fill="#5a5a5a"/><rect x="464.4" y="147.2" width="1.6" height="1.4" fill="#5a5a5a"/><rect x="461" y="150.0" width="1.6" height="1.4" fill="#5a5a5a"/><rect x="464.4" y="150.0" width="1.6" height="1.4" fill="#5a5a5a"/><rect x="461" y="152.8" width="1.6" height="1.4" fill="#5a5a5a"/><rect x="464.4" y="152.8" width="1.6" height="1.4" fill="#5a5a5a"/><path d="M472 136 l13 11 l-5.5 0.5 l3.5 8 l-3 1.2 l-3.5 -8 l-4.5 3.5z" fill="#9a9a9a" stroke="#555" stroke-width="0.6"/><path d="M486 140 q0 -4 4 -4 q4 0 4 4 q0 3 -4 5 v3" stroke="#4d8ad8" stroke-width="1.8" fill="none"/><circle cx="490" cy="152.5" r="1.2" fill="#4d8ad8"/><rect x="507" y="138.8" width="1.6" height="1.4" fill="#5a5a5a"/><rect x="510.4" y="138.8" width="1.6" height="1.4" fill="#5a5a5a"/><rect x="507" y="141.6" width="1.6" height="1.4" fill="#5a5a5a"/><rect x="510.4" y="141.6" width="1.6" height="1.4" fill="#5a5a5a"/><rect x="507" y="144.4" width="1.6" height="1.4" fill="#5a5a5a"/><rect x="510.4" y="144.4" width="1.6" height="1.4" fill="#5a5a5a"/><rect x="507" y="147.2" width="1.6" height="1.4" fill="#5a5a5a"/><rect x="510.4" y="147.2" width="1.6" height="1.4" fill="#5a5a5a"/><rect x="507" y="150.0" width="1.6" height="1.4" fill="#5a5a5a"/><rect x="510.4" y="150.0" width="1.6" height="1.4" fill="#5a5a5a"/><rect x="507" y="152.8" width="1.6" height="1.4" fill="#5a5a5a"/><rect x="510.4" y="152.8" width="1.6" height="1.4" fill="#5a5a5a"/><path d="M520.41 151.12 L528.00 155.50 L528.00 151.12 L520.41 146.73Z" fill="#6c9cdc" stroke="#1d4a8a" stroke-width="0.5" stroke-linejoin="round"/><path d="M535.59 151.12 L528.00 155.50 L528.00 151.12 L535.59 146.73Z" fill="#3f74c0" stroke="#1d4a8a" stroke-width="0.5" stroke-linejoin="round"/><path d="M528.00 142.35 L535.59 146.73 L528.00 151.12 L520.41 146.73Z" fill="#a9ccf2" stroke="#1d4a8a" stroke-width="0.5" stroke-linejoin="round"/><path d="M520.41 146.73 L524.20 148.92 L524.20 143.08 L520.41 140.88Z" fill="#6c9cdc" stroke="#1d4a8a" stroke-width="0.5" stroke-linejoin="round"/><path d="M531.80 144.54 L524.20 148.92 L524.20 143.08 L531.80 138.69Z" fill="#3f74c0" stroke="#1d4a8a" stroke-width="0.5" stroke-linejoin="round"/><path d="M528.00 136.50 L531.80 138.69 L524.20 143.08 L520.41 140.88Z" fill="#a9ccf2" stroke="#1d4a8a" stroke-width="0.5" stroke-linejoin="round"/><rect x="551" y="135.5" width="18" height="21" fill="#f6f6f6" stroke="#999" stroke-width="0.5"/><rect x="553" y="144.5" width="9" height="9" fill="none" stroke="#d41414" stroke-width="1.3"/><circle cx="562.5" cy="142" r="5" fill="none" stroke="#d41414" stroke-width="1.3"/><path d="M576 143.5 h8 l-4 4z" fill="#8a8a8a"/><rect x="595.5" y="135.5" width="19" height="20.5" fill="#d8d8d8" stroke="#aaa" stroke-width="0.5"/><rect x="597.5" y="144" width="9" height="9" fill="none" stroke="#a0a0a0" stroke-width="1.2"/><circle cx="606" cy="142" r="5" fill="none" stroke="#a0a0a0" stroke-width="1.2"/><circle cx="610" cy="151" r="5.5" fill="#bcbcbc" stroke="#8a8a8a" stroke-width="0.6"/><path d="M607 151 l2 2 l4 -4" stroke="#eee" stroke-width="1.4" fill="none"/><path d="M631 156 l5 -12 h4 l5 12 q-7 2 -14 0z" fill="url(#gGrey)"/><circle cx="637.5" cy="141" r="4.2" fill="#c8c8c8" stroke="#8a8a8a" stroke-width="0.6"/><path d="M640 144 l3 3" stroke="#8a8a8a" stroke-width="1.2"/><path d="M658 139 q6 3 12 -1 q6 -3 9 0 q1 5 -3 9 q-3 4 0 9 q-7 3 -12 -1 q-4 -2 -6 0 q-2 -8 0 -16z" fill="url(#gGreen)"/><circle cx="678.5" cy="137.5" r="1.8" fill="#e01818"/><circle cx="659.5" cy="145" r="1.8" fill="#e01818"/><circle cx="675" cy="155" r="1.8" fill="#e01818"/><path d="M690.5 150.5 q-1 -4 4 -4.5 l2 2 z M711.5 150.5 q1 -4 -4 -4.5 l-2 2 z" fill="#b8b8b8" stroke="#7a7a7a" stroke-width="0.5"/><path d="M692 145 q-1 -4 3 -5 q1 -4 5 -3.5 q3 -2 5.5 0.5 q4 0 4 4 q3 2 0.5 5 q-9 3 -18 -1z" fill="#cfcfcf" stroke="#8a8a8a" stroke-width="0.5"/><ellipse cx="701" cy="150.5" rx="5.2" ry="6.5" fill="#dcdcdc" stroke="#8a8a8a" stroke-width="0.5"/><rect x="698" y="146.5" width="6" height="2.4" rx="1.2" fill="#555"/><circle cx="699.5" cy="147.7" r="0.8" fill="#fff"/><circle cx="702.5" cy="147.7" r="0.8" fill="#fff"/><path d="M699.5 155 q1.5 1 3 0" stroke="#777" stroke-width="0.6" fill="none"/><path d="M732 136 l10 10 l-10 10 l-10 -10z" fill="none" stroke="#3a78c8" stroke-width="1.4"/><circle cx="732" cy="136" r="1.8" fill="#e01818"/><circle cx="742" cy="146" r="1.8" fill="#e01818"/><circle cx="732" cy="156" r="1.8" fill="#e01818"/><circle cx="722" cy="146" r="1.8" fill="#e01818"/><path d="M749.5 143.5 h8 l-4 4z" fill="#8a8a8a"/><rect x="70.5" y="175.5" width="1.6" height="1.4" fill="#5a5a5a"/><rect x="73.9" y="175.5" width="1.6" height="1.4" fill="#5a5a5a"/><rect x="70.5" y="178.3" width="1.6" height="1.4" fill="#5a5a5a"/><rect x="73.9" y="178.3" width="1.6" height="1.4" fill="#5a5a5a"/><rect x="70.5" y="181.1" width="1.6" height="1.4" fill="#5a5a5a"/><rect x="73.9" y="181.1" width="1.6" height="1.4" fill="#5a5a5a"/><rect x="70.5" y="183.9" width="1.6" height="1.4" fill="#5a5a5a"/><rect x="73.9" y="183.9" width="1.6" height="1.4" fill="#5a5a5a"/><rect x="70.5" y="186.7" width="1.6" height="1.4" fill="#5a5a5a"/><rect x="73.9" y="186.7" width="1.6" height="1.4" fill="#5a5a5a"/><rect x="70.5" y="189.5" width="1.6" height="1.4" fill="#5a5a5a"/><rect x="73.9" y="189.5" width="1.6" height="1.4" fill="#5a5a5a"/><path d="M81.5 187.5 l10.5 -5 l10.5 5 l-10.5 5z" fill="none" stroke="#d81818" stroke-width="1.5"/><path d="M82 177.5 l10 -5 l10.5 5 v5.5 l-10.5 4.5 l-10 -4.5z" fill="url(#gYel)" stroke="#6a5400" stroke-width="0.6"/><path d="M82 177.5 l10 4.5 l10.5 -4.5 M92 182 v5.5" stroke="#6a5400" stroke-width="0.6" fill="none"/><path d="M82 177.5 l10 -5 l10.5 5 l-10.5 4.5z" fill="#fff27a"/><path d="M113 192 l22 -17" stroke="#d81818" stroke-width="1.3"/><path d="M114 182 q4 -6 12 -7 q6 2 9 7 q-1 6 -5 10 l-6 1 q0 -8 -10 -11z" fill="url(#gYel2)" stroke="#7a6400" stroke-width="0.6"/><path d="M147 182 l14 -8 l4 1 v17 l-4 -2z" fill="url(#gYel2)" stroke="#7a6400" stroke-width="0.5"/><rect x="147" y="180.5" width="6" height="7" fill="none" stroke="#d81818" stroke-width="1.5"/><path d="M157 174.5 l8 1.5 v16.5 l-8 -2" fill="none" stroke="#d81818" stroke-width="1.5"/><path d="M178 184 q4 -3 7 -9 l6 -2 l6 8 q-3 6 -14 10z" fill="url(#gYel2)" stroke="#7a6400" stroke-width="0.5"/><rect x="178" y="183" width="5.5" height="6.5" fill="none" stroke="#d81818" stroke-width="1.5"/><path d="M185 175 l6 -2 l6 8" fill="none" stroke="#d81818" stroke-width="1.5"/><circle cx="197.5" cy="173" r="1.2" fill="#d81818"/><path d="M210 193 l21 -17" stroke="#d81818" stroke-width="1.4"/><g fill="none" stroke="#7a6400" stroke-width="3.4" stroke-linecap="round"><path d="M214 187 q-2 -4 4 -5 q7 -1 6 3 q-1 3 -6 2"/><path d="M219 181 q-1 -5 5 -6 q6 0 5 3 q-1 3 -5 2"/></g><g fill="none" stroke="url(#gYel2)" stroke-width="2.4" stroke-linecap="round"><path d="M214 187 q-2 -4 4 -5 q7 -1 6 3 q-1 3 -6 2"/><path d="M219 181 q-1 -5 5 -6 q6 0 5 3 q-1 3 -5 2"/></g><path d="M214 189 q3 5 8 1" fill="none" stroke="#e8c800" stroke-width="2.4" stroke-linecap="round"/><path d="M242 176 l6 -3.5 h13.5 v14.5 l-6 5 h-13.5z" fill="url(#gYel)" stroke="#7a6400" stroke-width="0.5"/><path d="M253 176 v16 M244 192 l9 -1 l8.5 -2.5" stroke="#d81818" stroke-width="1.1" fill="none"/><circle cx="253" cy="176" r="1.8" fill="#e01818"/><circle cx="243" cy="191.5" r="1.8" fill="#e01818"/><circle cx="253" cy="192" r="1.8" fill="#e01818"/><circle cx="261.5" cy="189" r="1.8" fill="#e01818"/><path d="M268.5 180.5 h8 l-4 4z" fill="#8a8a8a"/><rect x="285.2" y="174.5" width="1.6" height="18.5" fill="#6a6a6a"/><path d="M295 184 l13 -6 l9 3 v6 l-13 6 l-9 -3z" fill="url(#gBlue)" stroke="#1d4a8a" stroke-width="0.7"/><path d="M295 184 l9 3 l13 -6 M304 187 v6" stroke="#1d4a8a" stroke-width="0.6" fill="none"/><path d="M302 183 l5 -2.5 l4 1.5 l-5 2.5z" fill="#d81818"/><path d="M327 173 l14 2 v18 l-14 -2z" fill="#4a80c8" stroke="#1d4a8a" stroke-width="0.7"/><path d="M341 175 l8 -1 v18 l-8 1z" fill="#3a68a8" stroke="#1d4a8a" stroke-width="0.6"/><ellipse cx="334" cy="183" rx="4.5" ry="6.5" fill="#d81818"/><ellipse cx="335" cy="183" rx="3" ry="5" fill="#a00000"/><path d="M359 192 l22 -17" stroke="#d81818" stroke-width="1.3"/><path d="M360 182 q4 -6 10 -6 q5 -2 9 2 q-1 7 -6 12 l-4 2 q-1 -8 -9 -10z" fill="url(#gBlue)" stroke="#1d4a8a" stroke-width="0.6"/><path d="M371 177 q5 2 6 9" stroke="#d81818" stroke-width="2.5" fill="none"/><path d="M393 182 l14 -8 l4 1 v17 l-4 -2z" fill="url(#gRed)" stroke="#700" stroke-width="0.5"/><rect x="393" y="180.5" width="6" height="7" fill="none" stroke="#6a9ad8" stroke-width="1.5"/><path d="M403 174.5 l8 1.5 v16.5 l-8 -2" fill="none" stroke="#6a9ad8" stroke-width="1.3"/><path d="M423 184 q4 -3 7 -9 l6 -2 l6 8 q-3 6 -14 10z" fill="url(#gRed)" stroke="#700" stroke-width="0.5"/><rect x="423" y="183" width="5.5" height="6.5" fill="none" stroke="#6a9ad8" stroke-width="1.5"/><path d="M430 175 l6 -2 l6 8" fill="none" stroke="#6a9ad8" stroke-width="1.5"/><path d="M456 193 l21 -17" stroke="#d81818" stroke-width="1.4"/><g fill="none" stroke="#173a70" stroke-width="3.4" stroke-linecap="round"><path d="M460 187 q-2 -4 4 -5 q7 -1 6 3 q-1 3 -6 2"/><path d="M465 181 q-1 -5 5 -6 q6 0 5 3 q-1 3 -5 2"/></g><g fill="none" stroke="#7aa6e0" stroke-width="2.4" stroke-linecap="round"><path d="M460 187 q-2 -4 4 -5 q7 -1 6 3 q-1 3 -6 2"/><path d="M465 181 q-1 -5 5 -6 q6 0 5 3 q-1 3 -5 2"/></g><path d="M460 189 q3 5 8 1" fill="none" stroke="#5a8ad0" stroke-width="2.4" stroke-linecap="round"/><path d="M488.5 176 l6 -3.5 h13.5 v14.5 l-6 5 h-13.5z" fill="url(#gRed)" stroke="#700" stroke-width="0.5"/><path d="M499.5 176 v16 M490 192 l9 -1 l8.5 -2.5" stroke="#6a9ad8" stroke-width="1.1" fill="none"/><circle cx="499.5" cy="176" r="1.8" fill="#8ab4e8"/><circle cx="489.5" cy="191.5" r="1.8" fill="#8ab4e8"/><circle cx="499.5" cy="192" r="1.8" fill="#8ab4e8"/><circle cx="508" cy="189" r="1.8" fill="#8ab4e8"/><path d="M514.5 180.5 h8 l-4 4z" fill="#8a8a8a"/><rect x="530.9000000000001" y="174.5" width="1.6" height="18.5" fill="#6a6a6a"/><circle cx="555" cy="179" r="7.2" fill="url(#gSph)"/><circle cx="548" cy="186.5" r="7.2" fill="url(#gSph)" stroke="#1d4a8a" stroke-width="0.4"/><rect x="575.5" y="175.5" width="1.6" height="1.4" fill="#5a5a5a"/><rect x="578.9" y="175.5" width="1.6" height="1.4" fill="#5a5a5a"/><rect x="575.5" y="178.3" width="1.6" height="1.4" fill="#5a5a5a"/><rect x="578.9" y="178.3" width="1.6" height="1.4" fill="#5a5a5a"/><rect x="575.5" y="181.1" width="1.6" height="1.4" fill="#5a5a5a"/><rect x="578.9" y="181.1" width="1.6" height="1.4" fill="#5a5a5a"/><rect x="575.5" y="183.9" width="1.6" height="1.4" fill="#5a5a5a"/><rect x="578.9" y="183.9" width="1.6" height="1.4" fill="#5a5a5a"/><rect x="575.5" y="186.7" width="1.6" height="1.4" fill="#5a5a5a"/><rect x="578.9" y="186.7" width="1.6" height="1.4" fill="#5a5a5a"/><rect x="575.5" y="189.5" width="1.6" height="1.4" fill="#5a5a5a"/><rect x="578.9" y="189.5" width="1.6" height="1.4" fill="#5a5a5a"/><path d="M586 185.7 L597.2 188.2 L607.5 181 L607.5 187.4 L597.2 192.8 L586 190.2Z" fill="#3f72bb" stroke="#173a70" stroke-width="0.6"/><path d="M597.2 185.7 L607.5 178 L607.5 187.4 L597.2 192.8Z" fill="#4a80c8" stroke="#173a70" stroke-width="0.6"/><path d="M586.5 185 Q588 176 598 173.6 L601.5 173.6 L607.5 177.5 L597.2 185.7 L586.5 185.5Z" fill="url(#gRed)" stroke="#6a0000" stroke-width="0.5"/><path d="M601.5 173.6 L607.5 176.5 L607.5 178.2 L597.2 185.7" fill="none" stroke="#8ab4e8" stroke-width="1"/><path d="M586.5 188 L597.2 190.5" stroke="#8ab4e8" stroke-width="1"/><path d="M618 185.7 L629.2 188.2 L639.5 181 L639.5 187.4 L629.2 192.8 L618 190.2Z" fill="#3f72bb" stroke="#173a70" stroke-width="0.6"/><path d="M629.2 185.7 L639.5 178 L639.5 187.4 L629.2 192.8Z" fill="#4a80c8" stroke="#173a70" stroke-width="0.6"/><path d="M618.5 185.5 L628 174.5 L633 173.6 L639.5 177.5 L629.2 185.7Z" fill="url(#gRed)" stroke="#6a0000" stroke-width="0.5"/><path d="M633 173.6 L639.5 176.5 L639.5 178.2 L629.2 185.7" fill="none" stroke="#8ab4e8" stroke-width="1"/><path d="M618.5 188 L629.2 190.5" stroke="#8ab4e8" stroke-width="1"/><path d="M650 177 l11 -4.5 l11 4.5 v11 l-11 5 l-11 -5z" fill="#4a80c8" stroke="#1d4a8a" stroke-width="0.7"/><path d="M652 178.5 l9 4 v9 l-9 -4z M670 178.5 l-9 4 v9 l9 -4z M653 177 l8 -3 l8 3 l-8 3.5z" fill="#e01818"/><path d="M661 182.5 v10" stroke="#8ab4e8" stroke-width="1"/><path d="M682.5 178 l6 -6 l15 3 v13 l-8 5 l-13 -3z" fill="#5a90d8" stroke="#1d4a8a" stroke-width="0.7"/><path d="M686 179 l5 -4 l10 2 v10 l-5 3 l-10 -2z" fill="#e01818"/><path d="M691 175 v11 l-5 4 M691 186 l10 1" stroke="#900" stroke-width="0.7" fill="none"/><rect x="716.5" y="175.5" width="1.6" height="1.4" fill="#5a5a5a"/><rect x="719.9" y="175.5" width="1.6" height="1.4" fill="#5a5a5a"/><rect x="716.5" y="178.3" width="1.6" height="1.4" fill="#5a5a5a"/><rect x="719.9" y="178.3" width="1.6" height="1.4" fill="#5a5a5a"/><rect x="716.5" y="181.1" width="1.6" height="1.4" fill="#5a5a5a"/><rect x="719.9" y="181.1" width="1.6" height="1.4" fill="#5a5a5a"/><rect x="716.5" y="183.9" width="1.6" height="1.4" fill="#5a5a5a"/><rect x="719.9" y="183.9" width="1.6" height="1.4" fill="#5a5a5a"/><rect x="716.5" y="186.7" width="1.6" height="1.4" fill="#5a5a5a"/><rect x="719.9" y="186.7" width="1.6" height="1.4" fill="#5a5a5a"/><rect x="716.5" y="189.5" width="1.6" height="1.4" fill="#5a5a5a"/><rect x="719.9" y="189.5" width="1.6" height="1.4" fill="#5a5a5a"/><path d="M727 186 l10 -10 l12 -2 v18 l-4 1.5 h-18z" fill="#6a9ad8" stroke="#1d4a8a" stroke-width="0.7"/><path d="M727 190 l22 -4" stroke="#1d4a8a" stroke-width="0.5"/><path d="M731 178 l3 -4 l4 2 v8 l-4 3 l-3 -2z" fill="#4a80c8" stroke="#1d4a8a" stroke-width="0.5"/><ellipse cx="743.5" cy="188" rx="5.5" ry="4" fill="#e8c800"/><rect x="738" y="181" width="11" height="7" fill="url(#gYel)"/><ellipse cx="743.5" cy="181" rx="5.5" ry="3" fill="#fff27a"/><path d="M759 186 l10 -10 l12 -2 v18 l-4 1.5 h-18z" fill="#6a9ad8" stroke="#1d4a8a" stroke-width="0.7"/><path d="M759 190 l22 -4" stroke="#1d4a8a" stroke-width="0.5"/><rect x="760" y="180" width="5.5" height="5" fill="#3a70b8" stroke="#1d4a8a" stroke-width="0.5"/><rect x="767.5" y="179" width="5.5" height="5.5" fill="url(#gYel)" stroke="#6a5a00" stroke-width="0.5"/><rect x="775" y="179" width="5.5" height="5.5" fill="url(#gYel)" stroke="#6a5a00" stroke-width="0.5"/><path d="M791 186 l10 -10 l12 -2 v18 l-4 1.5 h-18z" fill="#6a9ad8" stroke="#1d4a8a" stroke-width="0.7"/><path d="M791 190 l22 -4" stroke="#1d4a8a" stroke-width="0.5"/><rect x="795" y="183" width="5" height="5" fill="#3a70b8"/><rect x="797" y="176.5" width="5" height="4.5" fill="url(#gYel)" stroke="#6a5a00" stroke-width="0.5"/><rect x="804" y="174" width="5" height="4.5" fill="url(#gYel)" stroke="#6a5a00" stroke-width="0.5"/><rect x="808" y="179" width="5" height="4.5" fill="url(#gYel)" stroke="#6a5a00" stroke-width="0.5"/><rect x="806" y="184" width="5" height="4.5" fill="url(#gYel)" stroke="#6a5a00" stroke-width="0.5"/><rect x="800" y="186" width="5" height="4.5" fill="url(#gYel)" stroke="#6a5a00" stroke-width="0.5"/><path d="M823 186 l10 -10 l12 -2 v18 l-4 1.5 h-18z" fill="#6a9ad8" stroke="#1d4a8a" stroke-width="0.7"/><path d="M823 190 l22 -4" stroke="#1d4a8a" stroke-width="0.5"/><rect x="825" y="177" width="6" height="5" fill="url(#gYel)" stroke="#6a5a00" stroke-width="0.5"/><rect x="833" y="173" width="12" height="11" fill="url(#gYel)" stroke="#6a5a00" stroke-width="0.5"/><rect x="836" y="184" width="9" height="8.5" fill="url(#gYel)" stroke="#6a5a00" stroke-width="0.5"/><rect x="829" y="186" width="5" height="5" fill="#3a70b8"/></svg>
<div class="a txt" style="left:331px;top:102px;font-size:12.6px;color:#ececec">Part Design</div>

<div id="tasks" class="a"></div>
<div id="view" class="a"></div>
<div id="tree" class="a"></div>
<div id="status" class="a"></div>
<div class="a" style="left:494px;top:202px;width:1164px;height:816px;background:#3b3b3b"></div>
<svg class="a" style="left:494px;top:202px" width="1164" height="816" viewBox="494 202 1164 816"><defs>
<linearGradient id="vBand" x1="0" y1="570" x2="0" y2="605" gradientUnits="userSpaceOnUse">
 <stop offset="0" stop-color="#6e737b"/><stop offset="0.2" stop-color="#777c84"/><stop offset="0.33" stop-color="#a4aab1"/>
 <stop offset="0.4" stop-color="#c4cad1"/><stop offset="0.6" stop-color="#c4cad1"/><stop offset="0.7" stop-color="#969ca3"/>
 <stop offset="0.8" stop-color="#7a7f87"/><stop offset="1" stop-color="#6c7178"/></linearGradient>
<linearGradient id="vTL" x1="741.7" y1="450" x2="758.3" y2="456.3" gradientUnits="userSpaceOnUse">
 <stop offset="0" stop-color="#45494e"/><stop offset="0.3" stop-color="#55595e"/><stop offset="0.7" stop-color="#5f6469"/><stop offset="1" stop-color="#62676c"/></linearGradient>
<linearGradient id="vTR" x1="1238.3" y1="450" x2="1261.8" y2="445.3" gradientUnits="userSpaceOnUse">
 <stop offset="0" stop-color="#62676c"/><stop offset="0.5" stop-color="#5a5e63"/><stop offset="0.85" stop-color="#4b4f54"/><stop offset="1" stop-color="#3e4246"/></linearGradient>
<linearGradient id="vBL" x1="757" y1="800" x2="772" y2="794.5" gradientUnits="userSpaceOnUse">
 <stop offset="0" stop-color="#505459"/><stop offset="0.4" stop-color="#62676c"/><stop offset="1" stop-color="#666b71"/></linearGradient>
<linearGradient id="vBR" x1="1237" y1="800" x2="1252" y2="803" gradientUnits="userSpaceOnUse">
 <stop offset="0" stop-color="#62676c"/><stop offset="0.6" stop-color="#55595e"/><stop offset="1" stop-color="#43474c"/></linearGradient>
<radialGradient id="vSL" cx="712" cy="588" r="28" gradientUnits="userSpaceOnUse">
 <stop offset="0" stop-color="#c0c6cd"/><stop offset="0.25" stop-color="#8e949b"/><stop offset="1" stop-color="#62676d"/></radialGradient>
<radialGradient id="vSR" cx="1264" cy="588" r="30" gradientUnits="userSpaceOnUse">
 <stop offset="0" stop-color="#c0c6cd"/><stop offset="0.25" stop-color="#8e949b"/><stop offset="1" stop-color="#5e6369"/></radialGradient>
</defs><path d="M793 337 L1224 337 Q1239 340 1243 359 L1290 575 Q1299 590 1294 608 L1291 618 L1218 960 Q1212 976 1196 978 L846 978 Q831 976 826 963 L690 620 L686 612 Q680 594 688 578 L779 353 Q784 339 793 337 Z" fill="#5a5e63"/><path d="M793 337 L803 337 L715 570 L688 578 L779 353 Q784 339 793 337Z" fill="url(#vTL)"/><path d="M1217 337 L1224 337 Q1239 340 1243 359 L1290 575 L1261 570Z" fill="url(#vTR)"/><path d="M690 620 L703 616 L839 972.5 L846 978 Q831 976 826 963Z" fill="url(#vBL)"/><path d="M1291 618 L1275 612 L1203 972.5 L1196 978 Q1212 976 1218 960Z" fill="url(#vBR)"/><path d="M803 337 L1217 337 L1261 570 L715 570Z" fill="#62676c"/><path d="M711 605 L1266 605 Q1273 606 1275 613 L1203 972.5 Q1201 977 1196 978 L846 978 Q841 977 839 972.5 L703 616 Q704 607 711 605Z" fill="#62676c"/><rect x="713" y="570.5" width="549" height="34.5" fill="url(#vBand)"/><path d="M713 570.5 L706 570.5 Q686 574 684.5 592 Q685 612 703 616 L711 605 L713 605Z" fill="url(#vSL)"/><path d="M1262 570.5 L1270 570.5 Q1293 575 1296.5 595 Q1295 613 1275 616 L1266 605 L1262 605Z" fill="url(#vSR)"/><path d="M793 337 L1224 337 M793 337 Q784 339 779 353 M1224 337 Q1239 340 1243 359" stroke="#121212" stroke-width="2" fill="none"/><path d="M803 337 L715 570 M1217 337 L1261 570" stroke="#121212" stroke-width="2" fill="none"/><path d="M706 570.5 L1270 570.5 M711 605 L1266 605" stroke="#121212" stroke-width="2" fill="none"/><path d="M713.5 570.5 Q711 588 713.5 605 M1261.5 570.5 Q1264 588 1261.5 605" stroke="#121212" stroke-width="1.5" fill="none"/><path d="M706 570.5 Q686 574 684.5 592 Q685 612 703 616 M711 605 Q704 607 703 616" stroke="#121212" stroke-width="1.4" fill="none"/><path d="M1270 570.5 Q1293 575 1296.5 595 Q1295 613 1275 616 M1266 605 Q1273 606 1275 613" stroke="#121212" stroke-width="1.4" fill="none"/><path d="M703 616 L839 972.5 Q841 977 846 978 L1196 978 Q1201 977 1203 972.5 L1275 612" stroke="#121212" stroke-width="2" fill="none"/><path d="M846 978.3 L1196 978.3" stroke="#121212" stroke-width="2"/><path d="M839 972.5 L826 963 Q831 976 846 978 M1203 972.5 L1218 960 Q1212 976 1196 978" stroke="#121212" stroke-width="1" fill="none"/><path d="M779 353 L688 578 M690 620 L826 963" stroke-dasharray="1.2 2" stroke="#111" stroke-width="1.2" fill="none"/><path d="M1243 359 L1290 575 M1291 618 L1218 960" stroke-dasharray="1.2 3.2" stroke="#111" stroke-width="1.2" fill="none"/><path d="M1585.9 208.3 L1598 221.2 L1574.5 221.2Z M1574.5 326.2 L1598 326.2 L1585.9 339Z M1520.5 273.6 L1533.5 262.4 L1533.5 285.3Z M1651.7 273.6 L1638.6 262.4 L1638.6 285.3Z" fill="#5f5f5f"/><circle cx="1643" cy="216.4" r="6.4" fill="#5f5f5f"/><path d="M1568 215.5 Q1549 219 1539 230.5 L1537.5 226 L1536 242.5 L1551.5 239.5 L1546.5 235.5 Q1555 227 1568 223 Z" fill="#5f5f5f"/><path d="M1604 215.5 Q1623 219 1633 230.5 L1634.5 226 L1636 242.5 L1620.5 239.5 L1625.5 235.5 Q1617 227 1604 223 Z" fill="#5f5f5f"/><path d="M1570.4 237.6 L1602.7 237.6 L1616 247 L1620.1 267.1 L1620.1 280.6 L1616 300.7 L1602.7 310.1 L1570.4 310.1 L1555.7 300.7 L1551.6 280.6 L1551.6 267.1 L1555.7 247Z" fill="#666666" stroke="#3a3a3a" stroke-width="0.6"/><path d="M1563 240 L1559 261.8 L1566.4 267.8 M1609.4 240 L1613.4 261.8 L1605.6 267.8 M1559 286 L1563 307.4 M1566.4 280.3 L1559 286 M1613.4 286 L1609.4 307.4 M1605.6 280.3 L1613.4 286 M1559 261.8 L1551.6 268 M1559 286 L1551.6 280 M1613.4 261.8 L1620.1 268 M1613.4 286 L1620.1 280" stroke="#3c3c3c" stroke-width="0.9" fill="none"/><rect x="1566.4" y="267.8" width="39.2" height="12.5" fill="none" stroke="#3c3c3c" stroke-width="0.9"/><text x="1586" y="253.8" font-family="Liberation Sans" font-size="8.6" fill="#565656" text-anchor="middle" textLength="44" lengthAdjust="spacingAndGlyphs" stroke="#4a4a4a" stroke-width="0.3">FRONT</text><text x="1586" y="300.2" font-family="Liberation Sans" font-size="7.4" fill="#565656" text-anchor="middle" textLength="46" lengthAdjust="spacingAndGlyphs" stroke="#4a4a4a" stroke-width="0.3">BOTTOM</text><path d="M1620.5 315 L1631 311.2 L1640.5 314.5 L1640.5 327 L1630 330.5 L1620.5 326.5Z" fill="#5f5f5f" stroke="#2e2e2e" stroke-width="0.8"/><path d="M1620.5 315 L1630 318.5 L1640.5 314.5 M1630 318.5 V330.5" stroke="#2e2e2e" stroke-width="0.8" fill="none"/><path d="M1541.2 273.6 L1607.4 273.9" stroke="#c41818" stroke-width="1.6"/><path d="M1541.2 273.6 L1552.3 238.3" stroke="#1818c8" stroke-width="1.5"/><path d="M1541.2 273.6 L1552.3 309.4" stroke="#18c018" stroke-width="1.5"/><path d="M1617.5 977.3 V963" stroke="#2a2a8a" stroke-width="1.1"/><path d="M1617.5 962 l2.3 3.5 l-2.3 3.5 l-2.3 -3.5z" fill="#2a2a8a"/><path d="M1617.5 977.3 V994" stroke="#1f7a1f" stroke-width="1.1"/><path d="M1617.5 985.5 l2.3 3.5 l-2.3 3.5 l-2.3 -3.5z" fill="#1f7a1f"/><path d="M1617.5 977.3 H1640" stroke="#8a2020" stroke-width="1.1"/><path d="M1644.5 977.3 l-6 -2.2 v4.4z" fill="#8a2020"/><text x="1618.5" y="959.5" font-family="Liberation Sans" font-size="10" fill="#000">Z</text><text x="1645.5" y="975.5" font-family="Liberation Sans" font-size="10" fill="#000">X</text><text x="1618.5" y="992.5" font-family="Liberation Sans" font-size="10" fill="#000">Y</text></svg>

<div class="a" style="left:66px;top:202px;width:428px;height:19px;background:#313131"></div>
<div class="a" style="left:66px;top:221px;width:422px;height:827px;background:#353535"></div>
<div class="a" style="left:488px;top:221px;width:6px;height:827px;background:#313131"></div>
<div class="a txt" style="left:233px;top:205px;font-size:12.5px;color:#ededed">Tasks</div>
<div class="a" style="left:74px;top:229px;width:406px;height:65px;border-radius:4px;background:#1a1e28;border:1px solid #050505;overflow:hidden">
  <div style="position:absolute;left:0;top:0;width:404px;height:24px;background:linear-gradient(90deg,#020202 0%,#0b0c10 40%,#151a25 100%)"></div>
</div>
<svg class="a" style="left:66px;top:200px" width="428" height="100" viewBox="66 200 428 100">
 <g>
  <path d="M82 239 L88 236 L94.5 239 L94.5 246 L88 249 L82 246Z" fill="#3f74c0" stroke="#173a70" stroke-width="0.6"/>
  <path d="M82 239 L88 242 L88 249 L82 246Z" fill="#6c9cdc"/>
  <path d="M82 239 L88 236 L94.5 239 L88 242Z" fill="#a9ccf2"/>
  <path d="M88 236.5 V248 M82.5 247.5 L88 248.5 L94 246.5" stroke="#e01818" stroke-width="1" fill="none"/>
  <circle cx="88" cy="236.8" r="1.2" fill="#e01818"/><circle cx="82.3" cy="247.5" r="1.3" fill="#e01818"/><circle cx="88" cy="248.5" r="1.3" fill="#e01818"/><circle cx="94.3" cy="246.5" r="1.3" fill="#e01818"/>
 </g>
<path d="M85.40 276.77 L91.00 280.00 L91.00 276.77 L85.40 273.54Z" fill="#6c9cdc" stroke="#1d4a8a" stroke-width="0.5" stroke-linejoin="round"/><path d="M96.60 276.77 L91.00 280.00 L91.00 276.77 L96.60 273.54Z" fill="#3f74c0" stroke="#1d4a8a" stroke-width="0.5" stroke-linejoin="round"/><path d="M91.00 270.31 L96.60 273.54 L91.00 276.77 L85.40 273.54Z" fill="#a9ccf2" stroke="#1d4a8a" stroke-width="0.5" stroke-linejoin="round"/><path d="M85.40 273.54 L88.20 275.15 L88.20 270.85 L85.40 269.23Z" fill="#6c9cdc" stroke="#1d4a8a" stroke-width="0.5" stroke-linejoin="round"/><path d="M93.80 271.92 L88.20 275.15 L88.20 270.85 L93.80 267.62Z" fill="#3f74c0" stroke="#1d4a8a" stroke-width="0.5" stroke-linejoin="round"/><path d="M91.00 266.00 L93.80 267.62 L88.20 270.85 L85.40 269.23Z" fill="#a9ccf2" stroke="#1d4a8a" stroke-width="0.5" stroke-linejoin="round"/>
 <circle cx="468.3" cy="241.5" r="7.6" fill="none" stroke="#6a6e76" stroke-width="1.4"/>
 <path d="M464.8 241 l3.5 -3 l3.5 3 M464.8 245 l3.5 -3 l3.5 3" fill="none" stroke="#b8bcc4" stroke-width="1.2"/>
 <rect x="426.5" y="205.8" width="12" height="11.5" fill="none" stroke="#a8a8a8" stroke-width="1"/>
 <rect x="427" y="209" width="11" height="1" fill="#a8a8a8"/>
 <rect x="449.4" y="209.5" width="7.5" height="7.5" fill="none" stroke="#a8a8a8" stroke-width="1"/>
 <path d="M452.5 209.5 v-3.7 h9 v8.5 h-4.5" fill="none" stroke="#a8a8a8" stroke-width="1"/>
 <path d="M473 206.5 l11 11 M484 206.5 l-11 11" stroke="#8a8a8a" stroke-width="2.6"/>
 <path d="M473 206.5 l11 11 M484 206.5 l-11 11" stroke="#5e5e5e" stroke-width="1.2"/>
</svg>
<div class="a txt" style="left:98px;top:236px;font-size:12.5px;font-weight:bold;color:#ffffff;letter-spacing:0.1px">Start Part</div>
<div class="a txt" style="left:101.5px;top:266.5px;font-size:12.6px;color:#e8e8e8">Create body</div>

<div class="a" style="left:1658px;top:202px;width:262px;height:19px;background:#323232"></div>
<div class="a" style="left:1658px;top:221px;width:6px;height:827px;background:#333333"></div>
<div class="a" style="left:1664px;top:221px;width:256px;height:827px;background:#242424"></div>
<div class="a" style="left:1704px;top:245px;width:180px;height:24px;background:#1f2226"></div>
<div class="a txt" style="left:1737px;top:205px;font-size:12.5px;color:#ededed">Tree view</div>
<svg class="a" style="left:1658px;top:200px" width="262" height="360" viewBox="1658 200 262 360"><rect x="1858.5" y="205.5" width="12" height="12" fill="none" stroke="#a8a8a8" stroke-width="1"/><rect x="1859" y="209" width="11" height="1" fill="#a8a8a8"/><rect x="1881.5" y="209.5" width="8" height="8" fill="none" stroke="#a8a8a8" stroke-width="1"/><path d="M1885 209.5 v-4 h8.5 v8.5 h-4" fill="none" stroke="#a8a8a8" stroke-width="1"/><path d="M1905 206 l11 11 M1916 206 l-11 11" stroke="#8a8a8a" stroke-width="2.6"/><path d="M1905 206 l11 11 M1916 206 l-11 11" stroke="#5e5e5e" stroke-width="1.2"/><path d="M1670 230.5 h9 l-4.5 5z" fill="#f4f4f4"/><g transform="translate(1690,226)"><path d="M0 0 h7.5 l2.5 2.5 v11.5 h-10z" fill="#f0f0f0" stroke="#999" stroke-width="0.5"/><circle cx="6.5" cy="4.5" r="3" fill="#e01010"/><path d="M1.5 7 l3.5 -2 l3.5 2 v4.5 l-3.5 2 l-3.5 -2z" fill="#3f78c2" stroke="#1c3f78" stroke-width="0.5"/><path d="M1.5 7 l3.5 -2 l3.5 2 l-3.5 2z" fill="#8ab4e8"/><path d="M5 9 v4.5" stroke="#1c3f78" stroke-width="0.5"/></g><path d="M1690 254.5 h9 l-4.5 5z" fill="#f4f4f4"/><g transform="translate(1709.5,253)"><path d="M0.5 4 q5.5 -6 11 0 q-5.5 6 -11 0z" fill="#f2f2f2" stroke="#000" stroke-width="1.4"/><circle cx="6" cy="4" r="2" fill="#000"/></g><path d="M1731.40 260.77 L1737.00 264.00 L1737.00 260.77 L1731.40 257.54Z" fill="#6c9cdc" stroke="#1d4a8a" stroke-width="0.5" stroke-linejoin="round"/><path d="M1742.60 260.77 L1737.00 264.00 L1737.00 260.77 L1742.60 257.54Z" fill="#3f74c0" stroke="#1d4a8a" stroke-width="0.5" stroke-linejoin="round"/><path d="M1737.00 254.31 L1742.60 257.54 L1737.00 260.77 L1731.40 257.54Z" fill="#a9ccf2" stroke="#1d4a8a" stroke-width="0.5" stroke-linejoin="round"/><path d="M1731.40 257.54 L1734.20 259.15 L1734.20 254.85 L1731.40 253.23Z" fill="#6c9cdc" stroke="#1d4a8a" stroke-width="0.5" stroke-linejoin="round"/><path d="M1739.80 255.92 L1734.20 259.15 L1734.20 254.85 L1739.80 251.62Z" fill="#3f74c0" stroke="#1d4a8a" stroke-width="0.5" stroke-linejoin="round"/><path d="M1737.00 250.00 L1739.80 251.62 L1734.20 254.85 L1731.40 253.23Z" fill="#a9ccf2" stroke="#1d4a8a" stroke-width="0.5" stroke-linejoin="round"/><path d="M1711.3 277 v8 l5 -4z" fill="#f4f4f4"/><g transform="translate(1729,275)"><path d="M0 6.5 q6.5 -7 13 0 q-6.5 7 -13 0z" fill="#b4b4b4"/><ellipse cx="6.5" cy="6.5" rx="2.6" ry="2.4" fill="#7a7a7a"/><path d="M1.5 0.5 l11 11.5" stroke="#f4f4f4" stroke-width="1.6"/><path d="M1.5 0.5 l11 11.5" stroke="#555" stroke-width="0.6" stroke-dasharray="0.8 0.8"/></g><g transform="translate(1751,274)" stroke="#a8a8a8" stroke-width="1.3" fill="none"><path d="M6 0 v7.5 h7.5 M6 7.5 l-5.5 5.5"/></g><path d="M1710 302.5 h9 l-4.5 5z" fill="#f4f4f4"/><g transform="translate(1729,299)"><path d="M0 6.5 q6.5 -7 13 0 q-6.5 7 -13 0z" fill="#b4b4b4"/><ellipse cx="6.5" cy="6.5" rx="2.6" ry="2.4" fill="#7a7a7a"/><path d="M1.5 0.5 l11 11.5" stroke="#f4f4f4" stroke-width="1.6"/><path d="M1.5 0.5 l11 11.5" stroke="#555" stroke-width="0.6" stroke-dasharray="0.8 0.8"/></g><g transform="translate(1750,298)"><path d="M0.5 11 l7 3 l7 -3 l-7 -3z" fill="none" stroke="#a0a0a0" stroke-width="1"/><path d="M0.5 3.5 l7 -3 l7 3 v5 l-7 3 l-7 -3z" fill="#c8c8c8" stroke="#888" stroke-width="0.5"/><path d="M0.5 3.5 l7 3 l7 -3 v5 l-7 3 l-7 -3z" fill="#a8a8a8"/><path d="M0.5 3.5 l7 -3 l7 3 l-7 3z" fill="#e4e4e4"/></g><g transform="translate(1749,323)"><path d="M0 6.5 q6.5 -7 13 0 q-6.5 7 -13 0z" fill="#b4b4b4"/><ellipse cx="6.5" cy="6.5" rx="2.6" ry="2.4" fill="#7a7a7a"/><path d="M1.5 0.5 l11 11.5" stroke="#f4f4f4" stroke-width="1.6"/><path d="M1.5 0.5 l11 11.5" stroke="#555" stroke-width="0.6" stroke-dasharray="0.8 0.8"/></g><g transform="translate(1769.5,322)"><g fill="none" stroke="#a8a8a8" stroke-width="1.1"><rect x="0.5" y="6" width="8" height="8.5"/><circle cx="9.5" cy="5" r="4.3"/></g><circle cx="4.5" cy="10.5" r="4.3" fill="#c020d8"/><circle cx="4.5" cy="8.8" r="0.9" fill="#fff"/><circle cx="4.5" cy="12.2" r="0.9" fill="#fff"/></g><g transform="translate(1729,347)"><path d="M0 6.5 q6.5 -7 13 0 q-6.5 7 -13 0z" fill="#b4b4b4"/><ellipse cx="6.5" cy="6.5" rx="2.6" ry="2.4" fill="#7a7a7a"/><path d="M1.5 0.5 l11 11.5" stroke="#f4f4f4" stroke-width="1.6"/><path d="M1.5 0.5 l11 11.5" stroke="#555" stroke-width="0.6" stroke-dasharray="0.8 0.8"/></g><g transform="translate(1750,346)"><path d="M1 3 l5 -3 l8 1.5 v10 l-6 3 l-7.5 -1.5z" fill="#b0b0b0" stroke="#808080" stroke-width="0.5"/><path d="M3.5 3.5 l3.5 -2 l5 1 v8 l-4 2 l-4.5 -1z" fill="#d0d0d0"/><path d="M7 1.5 v8 l-3.5 2.5 M7 9.5 l5 1" stroke="#888" stroke-width="0.6" fill="none"/></g><g transform="translate(1729,371)"><path d="M0 6.5 q6.5 -7 13 0 q-6.5 7 -13 0z" fill="#b4b4b4"/><ellipse cx="6.5" cy="6.5" rx="2.6" ry="2.4" fill="#7a7a7a"/><path d="M1.5 0.5 l11 11.5" stroke="#f4f4f4" stroke-width="1.6"/><path d="M1.5 0.5 l11 11.5" stroke="#555" stroke-width="0.6" stroke-dasharray="0.8 0.8"/></g><g transform="translate(1750,370)" fill="none" stroke="#a8a8a8" stroke-width="1.1"><rect x="0.5" y="6" width="8" height="8.5"/><circle cx="9.5" cy="5" r="4.3"/></g><path d="M1710 398.5 h9 l-4.5 5z" fill="#f4f4f4"/><g transform="translate(1729,395)"><path d="M0 6.5 q6.5 -7 13 0 q-6.5 7 -13 0z" fill="#b4b4b4"/><ellipse cx="6.5" cy="6.5" rx="2.6" ry="2.4" fill="#7a7a7a"/><path d="M1.5 0.5 l11 11.5" stroke="#f4f4f4" stroke-width="1.6"/><path d="M1.5 0.5 l11 11.5" stroke="#555" stroke-width="0.6" stroke-dasharray="0.8 0.8"/></g><g transform="translate(1750,394)"><path d="M0.5 11 l7 3 l7 -3 l-7 -3z" fill="none" stroke="#a0a0a0" stroke-width="1"/><path d="M0.5 3.5 l7 -3 l7 3 v5 l-7 3 l-7 -3z" fill="#c8c8c8" stroke="#888" stroke-width="0.5"/><path d="M0.5 3.5 l7 3 l7 -3 v5 l-7 3 l-7 -3z" fill="#a8a8a8"/><path d="M0.5 3.5 l7 -3 l7 3 l-7 3z" fill="#e4e4e4"/></g><g transform="translate(1749,419)"><path d="M0 6.5 q6.5 -7 13 0 q-6.5 7 -13 0z" fill="#b4b4b4"/><ellipse cx="6.5" cy="6.5" rx="2.6" ry="2.4" fill="#7a7a7a"/><path d="M1.5 0.5 l11 11.5" stroke="#f4f4f4" stroke-width="1.6"/><path d="M1.5 0.5 l11 11.5" stroke="#555" stroke-width="0.6" stroke-dasharray="0.8 0.8"/></g><g transform="translate(1770,418)" fill="none" stroke="#a8a8a8" stroke-width="1.1"><rect x="0.5" y="6" width="8" height="8.5"/><circle cx="9.5" cy="5" r="4.3"/></g><g transform="translate(1729,443)"><path d="M0 6.5 q6.5 -7 13 0 q-6.5 7 -13 0z" fill="#b4b4b4"/><ellipse cx="6.5" cy="6.5" rx="2.6" ry="2.4" fill="#7a7a7a"/><path d="M1.5 0.5 l11 11.5" stroke="#f4f4f4" stroke-width="1.6"/><path d="M1.5 0.5 l11 11.5" stroke="#555" stroke-width="0.6" stroke-dasharray="0.8 0.8"/></g><g transform="translate(1750,442)"><path d="M0 10 l6 -6 l9 -1 v11 l-2 1 h-13z" fill="#a8a8a8"/><path d="M3 5 l2 -3 l3 1.5 v6 l-3 2 l-2 -1.5z" fill="#d8d8d8"/><rect x="8" y="7" width="6" height="5" fill="#e8e8e8"/><ellipse cx="11" cy="7" rx="3" ry="1.5" fill="#f4f4f4"/><path d="M0 14 h13" stroke="#888" stroke-width="0.6"/></g><g transform="translate(1729,467)"><path d="M0 6.5 q6.5 -7 13 0 q-6.5 7 -13 0z" fill="#b4b4b4"/><ellipse cx="6.5" cy="6.5" rx="2.6" ry="2.4" fill="#7a7a7a"/><path d="M1.5 0.5 l11 11.5" stroke="#f4f4f4" stroke-width="1.6"/><path d="M1.5 0.5 l11 11.5" stroke="#555" stroke-width="0.6" stroke-dasharray="0.8 0.8"/></g><g transform="translate(1750,466)" fill="none" stroke="#a8a8a8" stroke-width="1.1"><rect x="0.5" y="6" width="8" height="8.5"/><circle cx="9.5" cy="5" r="4.3"/></g><path d="M1711.3 493 v8 l5 -4z" fill="#f4f4f4"/><g transform="translate(1729,491)"><path d="M0 6.5 q6.5 -7 13 0 q-6.5 7 -13 0z" fill="#b4b4b4"/><ellipse cx="6.5" cy="6.5" rx="2.6" ry="2.4" fill="#7a7a7a"/><path d="M1.5 0.5 l11 11.5" stroke="#f4f4f4" stroke-width="1.6"/><path d="M1.5 0.5 l11 11.5" stroke="#555" stroke-width="0.6" stroke-dasharray="0.8 0.8"/></g><g transform="translate(1750,490)"><path d="M0.5 1 l10 1 v13 l-10 -1z" fill="#b8b8b8" stroke="#888" stroke-width="0.5"/><path d="M10.5 2 l4 -1 v13 l-4 1z" fill="#8e8e8e"/><ellipse cx="5.5" cy="8" rx="3" ry="4.5" fill="#5a5a5a"/><ellipse cx="6.2" cy="8" rx="1.8" ry="3.5" fill="#ddd"/></g><g transform="translate(1729,515)"><path d="M0 6.5 q6.5 -7 13 0 q-6.5 7 -13 0z" fill="#b4b4b4"/><ellipse cx="6.5" cy="6.5" rx="2.6" ry="2.4" fill="#7a7a7a"/><path d="M1.5 0.5 l11 11.5" stroke="#f4f4f4" stroke-width="1.6"/><path d="M1.5 0.5 l11 11.5" stroke="#555" stroke-width="0.6" stroke-dasharray="0.8 0.8"/></g><g transform="translate(1750,514)"><path d="M0.5 9 q0 -7 7 -8 h4 l3 1.5 v9.5 l-5 3 l-9 -2z" fill="#a8a8a8" stroke="#777" stroke-width="0.5"/><path d="M0.5 9 q0 -7 7 -8 h4 l3 1.5 l-5 3 l-9 3.5z" fill="#c8c8c8"/></g><g transform="translate(1729.5,541)"><path d="M0.5 4 q5.5 -6 11 0 q-5.5 6 -11 0z" fill="#f2f2f2" stroke="#000" stroke-width="1.4"/><circle cx="6" cy="4" r="2" fill="#000"/></g><g transform="translate(1750,538)"><path d="M0.5 9 q0 -7 7 -8 h4 l3 1.5 v9.5 l-5 3 l-9 -2z" fill="#3f78c2" stroke="#1c3f78" stroke-width="0.5"/><path d="M0.5 9 q0 -7 7 -8 h4 l3 1.5 l-5 3 l-9 3.5z" fill="#e01818"/><circle cx="10" cy="11" r="4.8" fill="#22aa22" stroke="#eee" stroke-width="0.8"/><path d="M10 8 v5.5 M7.5 11 l2.5 2.8 l2.5 -2.8" stroke="#fff" stroke-width="1.4" fill="none"/></g></svg>
<div class="a txt" style="left:1709.3px;top:224.5px;font-size:15px;font-weight:bold;color:#ffffff;letter-spacing:0px">case</div>
<div class="a txt" style="left:1751px;top:248.5px;font-size:15px;font-weight:bold;color:#ffffff;letter-spacing:0px">odins-eye-base</div>
<div class="a txt" style="left:1771.5px;top:273px;font-size:15px;font-weight:normal;color:#bdbdbd;letter-spacing:0.8px">Origin</div>
<div class="a txt" style="left:1771.5px;top:297px;font-size:15px;font-weight:normal;color:#bdbdbd;letter-spacing:1.0px">Pad</div>
<div class="a txt" style="left:1791.5px;top:321px;font-size:15px;font-weight:normal;color:#bdbdbd;letter-spacing:0.6px">Sketch</div>
<div class="a txt" style="left:1771.5px;top:345px;font-size:15px;font-weight:normal;color:#bdbdbd;letter-spacing:0.35px">Thickness</div>
<div class="a txt" style="left:1771.5px;top:369px;font-size:15px;font-weight:normal;color:#bdbdbd;letter-spacing:0.15px">Sketch001</div>
<div class="a txt" style="left:1771.5px;top:393px;font-size:15px;font-weight:normal;color:#bdbdbd;letter-spacing:0.5px">Pad001</div>
<div class="a txt" style="left:1791.5px;top:417px;font-size:15px;font-weight:normal;color:#bdbdbd;letter-spacing:0.45px">Sketch002</div>
<div class="a txt" style="left:1771.5px;top:441px;font-size:15px;font-weight:normal;color:#bdbdbd;letter-spacing:1.2px">Mirrored</div>
<div class="a txt" style="left:1771.5px;top:465px;font-size:15px;font-weight:normal;color:#bdbdbd;letter-spacing:0.4px">Sketch003</div>
<div class="a txt" style="left:1771.5px;top:489px;font-size:15px;font-weight:normal;color:#bdbdbd;letter-spacing:1.2px">Hole</div>
<div class="a txt" style="left:1771.5px;top:513px;font-size:15px;font-weight:normal;color:#bdbdbd;letter-spacing:0.7px">Fillet</div>
<div class="a txt" style="left:1771.5px;top:537px;font-size:15px;font-weight:normal;color:#ffffff;letter-spacing:0.25px">Fillet001</div>
<div class="a" style="left:494px;top:1018px;width:1164px;height:30px;background:#323232"></div>
<div class="a" style="left:494px;top:1017px;width:108px;height:31px;border-radius:0 0 5px 5px;background:#393939;border:1px solid #222;border-top:none"></div>
<svg class="a" style="left:500px;top:1020px" width="100" height="26" viewBox="500 1020 100 26"><path d="M501.5 1025 h8 l2 2 v12 h-10z" fill="#f0f0f0" stroke="#999" stroke-width="0.5"/><circle cx="508.5" cy="1029.5" r="2.8" fill="#e01010"/><path d="M502.5 1031.5 l3.5 -2 l3.5 2 v4.5 l-3.5 2 l-3.5 -2z" fill="#3f78c2" stroke="#1c3f78" stroke-width="0.5"/><path d="M502.5 1031.5 l3.5 2 l3.5 -2 M506 1033.5 v4.5" stroke="#1c3f78" stroke-width="0.5" fill="none"/><path d="M502.5 1031.5 l3.5 -2 l3.5 2 l-3.5 2z" fill="#8ab4e8"/><path d="M581.5 1027.5 l11 11 M592.5 1027.5 l-11 11" stroke="#8a8a8a" stroke-width="2.2"/></svg>
<div class="a txt" style="left:525.5px;top:1025.5px;font-size:12.5px;color:#e8e8e8">case : 1</div>
<div class="a txt" style="left:68px;top:1057px;font-size:12.5px;color:#e8e8e8;letter-spacing:-0.04px">Preselected: case.Body.Fillet001.Edge4 (38.00 mm, 49.00 mm, 11.86 mm)</div>
<div class="a" style="left:1563px;top:1051px;width:90px;height:27px;border-radius:3px;border:1.5px solid #050505;background:linear-gradient(#3d3d3d,#313131)"></div><div class="a" style="left:1659px;top:1051px;width:92px;height:27px;border-radius:3px;border:1.5px solid #050505;background:linear-gradient(#3d3d3d,#313131)"></div><div class="a" style="left:1758px;top:1051px;width:160px;height:27px;border-radius:3px;border:1.5px solid #050505;background:linear-gradient(#3d3d3d,#313131)"></div><svg class="a" style="left:1560px;top:1050px" width="360" height="30" viewBox="1560 1050 360 30"><rect x="1565.5" y="1058" width="13.5" height="12" fill="#e8d040"/><path d="M1565.5 1058 l6.75 6 l6.75 -6" stroke="#b09a10" stroke-width="0.6" fill="none"/><path d="M1641 1064.5 h8 l-4 4z M1741 1064.5 h8 l-4 4z M1907 1064.5 h8 l-4 4z" fill="#a0a0a0"/><path d="M1672 1066 q0 -5.5 6 -6.5 M1684 1062 q0 5.5 -6 6.5" stroke="#c8c8c8" stroke-width="2.4" fill="none"/><circle cx="1683" cy="1059" r="2.6" fill="#c8c8c8"/><circle cx="1673" cy="1069" r="2.6" fill="#c8c8c8"/></svg>
<div class="a txt" style="left:1584px;top:1057px;font-size:13px;color:#e8e8e8">3</div>
<div class="a txt" style="left:1688px;top:1057.5px;font-size:12.5px;color:#e8e8e8">Gesture</div>
<div class="a txt" style="left:1763px;top:1057.5px;font-size:12.5px;color:#e8e8e8">205.75 mm x 144.24 mm</div>
</body></html>
